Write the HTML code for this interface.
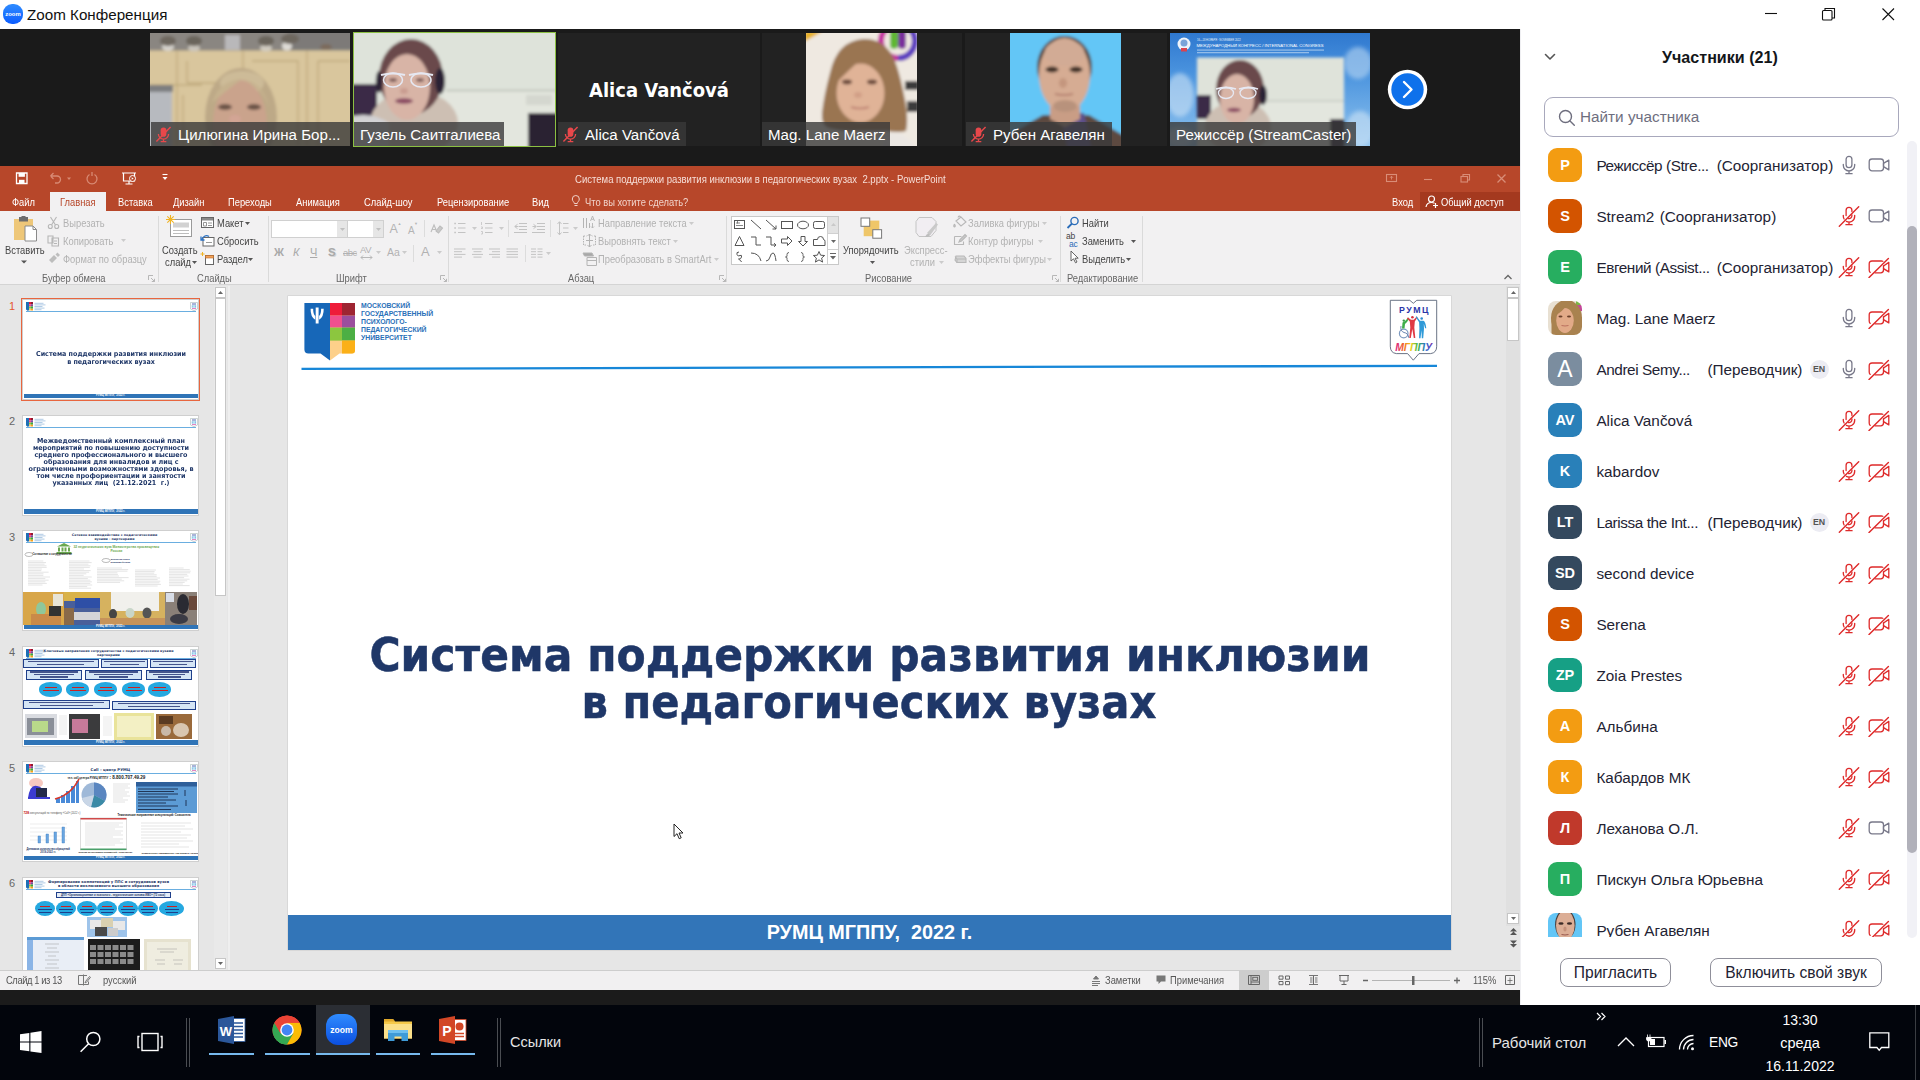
<!DOCTYPE html>
<html lang="ru"><head><meta charset="utf-8"><title>Zoom Конференция</title>
<style>
*{box-sizing:border-box;margin:0;padding:0}
html,body{width:1920px;height:1080px;overflow:hidden;background:#fff;font-family:"Liberation Sans","DejaVu Sans",sans-serif}
.a{position:absolute}
.t{position:absolute;white-space:nowrap;line-height:1}
svg{position:absolute;overflow:visible}
/* zoom */
#ztitle{left:0;top:0;width:1920px;height:29px;background:#fff}
#strip{left:0;top:29px;width:1520px;height:137px;background:#1a1a1a}
.tile{position:absolute;top:33px;height:113px;width:200px;background:#222;overflow:hidden}
.lbl{position:absolute;left:0;bottom:0;height:24.5px;background:rgba(58,58,58,.8);color:#fff;font-size:15.100px;line-height:25px;white-space:nowrap;padding-left:6px}
/* ppt */
#ppt{left:0;top:166px;width:1520px;height:824px;background:#e6e6e6;overflow:hidden}
#ptitle{left:0;top:0;width:1520px;height:45px;background:#b7472a}
#ribbon{left:0;top:45px;width:1520px;height:74px;background:#f2f1f2;border-bottom:1px solid #d4d4d4}
.rt{position:absolute;white-space:nowrap;line-height:1;font-size:10.5px;color:#444;transform:scaleX(.89);transform-origin:0 0}
.rd{color:#b2b2b2}
#status{left:0;top:805px;width:1520px;height:20px;background:#f3f3f3;border-top:1px solid #cfcfcf}
#gap{left:0;top:989.500px;width:1520px;height:16px;background:#1b1b1b}
#task{left:0;top:1005px;width:1920px;height:75px;background:#02050c}
/* right panel */
#panel{left:1520px;top:29px;width:400px;height:976px;background:#fff;border-left:1px solid #efeff2}
.row{position:absolute;left:0;width:400px;height:51px}
.av{position:absolute;left:27px;top:0;width:34px;height:34px;border-radius:9px;color:#fff;font-weight:bold;font-size:14.500px;text-align:center;line-height:34.500px}
.nm{position:absolute;left:75.400px;top:10.200px;font-size:15.300px;color:#232333;white-space:nowrap;line-height:1}
</style></head><body>
<div class="a" id="ztitle"></div>
<div class="a" id="strip"></div>
<!-- ===== Zoom title bar ===== -->
<svg style="left:2.500px;top:4px" width="20" height="20" viewBox="0 0 21 21"><defs><linearGradient id="zg" x1="0" y1="0" x2="0" y2="1"><stop offset="0" stop-color="#2f8cff"/><stop offset="1" stop-color="#0b5cff"/></linearGradient></defs><rect x="0" y="0" width="21" height="21" rx="9.5" fill="url(#zg)"/><text x="10.5" y="12.6" font-size="6.2" font-weight="bold" fill="#fff" text-anchor="middle" font-family="Liberation Sans,sans-serif">zoom</text></svg>
<div class="t" style="left:27px;top:6.500px;font-size:15.2px;color:#111">Zoom Конференция</div>
<svg style="left:1764px;top:7px" width="132" height="15" viewBox="0 0 132 15" fill="none" stroke="#111" stroke-width="1.1"><path d="M1 6.5h12"/><rect x="58.5" y="3.5" width="9.5" height="9.5" rx="1"/><path d="M61 3.5v-2h9.5v9.5h-2.5"/><path d="M118.5 1.5l11.5 11.5M130 1.5l-11.5 11.5"/></svg>

<!-- ===== Video strip ===== -->
<svg width="0" height="0"><defs>
<filter id="b1" x="-10%" y="-10%" width="120%" height="120%"><feGaussianBlur stdDeviation="1.5"/></filter>
<filter id="b0" x="-5%" y="-5%" width="110%" height="110%"><feGaussianBlur stdDeviation=".6"/></filter>
<filter id="b2" x="-10%" y="-10%" width="120%" height="120%"><feGaussianBlur stdDeviation="2.2"/></filter>
<symbol id="mut" viewBox="0 0 18 18"><rect x="6" y="1.5" width="6" height="10" rx="3" fill="#e8484b"/><path d="M3.6 8.5a5.4 5.4 0 0 0 10.8 0M9 14v2.2M6 16.6h6" fill="none" stroke="#e8484b" stroke-width="1.4"/><path d="M1.5 16.5L16.5 1" stroke="#e8484b" stroke-width="1.5"/></symbol>
</defs></svg>

<!-- tile 1 -->
<div class="tile" style="left:150px">
<svg width="200" height="113" viewBox="0 0 200 113"><g filter="url(#b1)">
<rect x="-5" y="-5" width="210" height="123" fill="#d9c69d"/>
<rect x="-5" y="-5" width="210" height="22.5" fill="#8a8681"/>
<rect x="138" y="-5" width="70" height="22" fill="#7d7a78"/>
<rect x="75" y="2" width="15" height="15" fill="#b9b8ba"/>
<ellipse cx="18" cy="14" rx="6" ry="4" fill="#d5d2cc"/><ellipse cx="44" cy="15" rx="6" ry="3.5" fill="#c9c4bb"/><ellipse cx="116" cy="15" rx="6" ry="3.5" fill="#cfcabf"/><ellipse cx="137" cy="13" rx="5" ry="4.5" fill="#dedbd6"/>
<ellipse cx="18" cy="8" rx="8" ry="5" fill="#6e675e"/><ellipse cx="44" cy="8" rx="8" ry="5" fill="#6b655c"/><ellipse cx="116" cy="8" rx="8" ry="5" fill="#6b655c"/><ellipse cx="140" cy="6" rx="9" ry="5" fill="#6e675e"/><ellipse cx="176" cy="14" rx="6" ry="3" fill="#7b6a5c"/>
<path d="M27 18v95M93 18v95M157 18v95M0 52h52M37 28v22M37 50h52M102 28h46v85M168 28h32M168 28v85M33 62v51" stroke="#bfa97c" stroke-width="1.400" fill="none"/>
<rect x="-5" y="52" width="27" height="66" fill="#b7babf"/><rect x="-5" y="52" width="28" height="7" fill="#7d7e80"/>
<ellipse cx="91" cy="84" rx="36" ry="49" fill="#bda987"/>
<ellipse cx="92" cy="50" rx="22" ry="12" fill="#cdbb98"/>
<ellipse cx="90" cy="92" rx="27" ry="45" fill="#caa38c"/>
<ellipse cx="75" cy="74" rx="7" ry="3" fill="#6b5347"/><ellipse cx="104" cy="74" rx="7" ry="3" fill="#6b5347"/>
<ellipse cx="85" cy="86" rx="6" ry="4" fill="#d3a595"/>
<path d="M62 70q6 -22 30 -24q-14 10 -30 24z" fill="#c6b28e"/><path d="M92 46q22 4 27 28q-8 -20 -27 -28z" fill="#c6b28e"/>
</g></svg>
<div class="lbl" style="width:200px;left:1px"><svg style="left:4px;top:4px" width="17" height="17"><use href="#mut"/></svg><span style="margin-left:21px">Цилюгина Ирина Бор...</span></div>
</div>

<!-- tile 2 (active speaker) -->
<div class="tile" style="left:353px;top:32px;width:203px;height:115px;border:1.5px solid #8cc043;background:#dde2d9">
<svg width="200" height="112" viewBox="0 0 200 112"><g filter="url(#b1)">
<rect x="-5" y="-5" width="210" height="122" fill="#dee3da"/>
<rect x="90" y="57" width="115" height="60" fill="#e3e6de"/>
<path d="M92 57.5h113" stroke="#b9beb4" stroke-width="1.4"/>
<rect x="172" y="62" width="26" height="10" fill="#d4d7cf"/>
<rect x="-5" y="51" width="28" height="32" fill="#3a2c47"/>
<path d="M174 80h31v37h-31z" fill="#2a2033"/>
<ellipse cx="60" cy="90" rx="44" ry="32" fill="#cdbfb3"/>
<ellipse cx="57" cy="44" rx="32" ry="38" fill="#6b4a4c"/>
<ellipse cx="86" cy="48" rx="5" ry="13" fill="#2a2434"/><ellipse cx="25" cy="49" rx="3.2" ry="11" fill="#2a2434"/>
<ellipse cx="53" cy="54" rx="23" ry="33" fill="#d8b4a6"/>
<path d="M-5 84q22 -6 40 6v30h-40z" fill="#d2d2d4"/>
<ellipse cx="50" cy="68" rx="9" ry="2.8" fill="#8a4a62"/><ellipse cx="39" cy="47" rx="4" ry="2" fill="#7a5a58"/><ellipse cx="66" cy="47" rx="4" ry="2" fill="#7a5a58"/><ellipse cx="50" cy="58" rx="4" ry="3" fill="#c99c90"/>
</g>
<g fill="none" stroke="#e6e8f2" stroke-width="1.5"><ellipse cx="39" cy="47" rx="9.5" ry="7"/><ellipse cx="67" cy="47" rx="10" ry="7"/><path d="M27 42q12 -3 24 0M55 42q12 -3 24 0" stroke-width="2.2"/></g>
</svg>
<div class="lbl" style="width:150px">Гузель Саитгалиева</div>
</div>

<!-- tile 3 -->
<div class="tile" style="left:558px;width:202px">
<div class="t" style="left:0;width:202px;text-align:center;top:47px;font-size:20px;font-weight:bold;color:#fff;font-family:'DejaVu Sans Condensed','DejaVu Sans',sans-serif">Alica Vančová</div>
<div class="lbl" style="width:128px"><svg style="left:4px;top:4px" width="17" height="17"><use href="#mut"/></svg><span style="margin-left:21px">Alica Vančová</span></div>
</div>

<!-- tile 4 -->
<div class="tile" style="left:762px">
<svg style="left:44px;top:0;overflow:hidden" width="111" height="113" viewBox="0 0 111 113"><g filter="url(#b1)">
<rect x="-5" y="-5" width="121" height="123" fill="#efe9e1"/>
<path d="M-2 -2h19l-19 11z" fill="#e8b22a"/>
<circle cx="92" cy="8" r="17" fill="none" stroke="#c32fa0" stroke-width="6"/>
<path d="M92 -9a17 17 0 0 1 0 34" fill="none" stroke="#5b3fc0" stroke-width="6"/>
<rect x="84" y="-4" width="8" height="20" rx="4" fill="#5fb733"/><rect x="92" y="-4" width="8" height="20" rx="4" fill="#7a2f9c"/>
<rect x="99" y="48" width="14" height="9" fill="#3a3a3a"/><rect x="101" y="68" width="12" height="11" fill="#3a3a3a"/>
<path d="M57 6q-26 2 -33 34q-6 22 -8 40q-1 12 6 15q14 4 28 3l30 0q14 2 20 0q3 -12 -2 -36q-6 -30 -12 -40q-10 -17 -29 -16z" fill="#9a7551"/>
<ellipse cx="54.500" cy="60" rx="24" ry="29.500" fill="#e0b397"/>
<path d="M30 50q2 -24 28 -26q-10 8 -28 26z" fill="#9a7551"/><path d="M58 24q18 2 21 30q-6 -20 -21 -30z" fill="#9a7551"/>
<ellipse cx="41" cy="49" rx="5" ry="2.400" fill="#6a4a3a"/><ellipse cx="66" cy="49" rx="5" ry="2.400" fill="#6a4a3a"/>
<ellipse cx="52" cy="62" rx="4" ry="3" fill="#d19f86"/>
<path d="M45 74q9 3 18 0" stroke="#b5766a" stroke-width="1.600" fill="none"/>
<path d="M80 100q18 -4 34 18h-40z" fill="#ebe7e3"/>
</g></svg>
<div class="lbl" style="width:128px">Mag. Lane Maerz</div>
</div>

<!-- tile 5 -->
<div class="tile" style="left:965px;width:202px">
<svg style="left:45px;top:0;overflow:hidden" width="111" height="113" viewBox="0 0 111 113"><g filter="url(#b1)">
<rect x="-5" y="-5" width="121" height="123" fill="#64c6f6"/>
<path d="M-5 118v-14l38 -22h46l37 22v14z" fill="#5b4a40"/>
<path d="M50 80l24 0l8 38h-24z" fill="#5d4f8b"/>
<path d="M40 70h30v16l-15 8l-15 -8z" fill="#c99d85"/>
<ellipse cx="54.500" cy="34" rx="27.500" ry="31" fill="#574a42"/>
<ellipse cx="54.500" cy="42" rx="25.500" ry="37" fill="#d6ac93"/>
<ellipse cx="54.500" cy="20" rx="20" ry="13" fill="#d2ab95"/>
<ellipse cx="42" cy="36.500" rx="6.500" ry="3" fill="#3d2e28"/><ellipse cx="66" cy="36.500" rx="6.500" ry="3" fill="#3d2e28"/>
<ellipse cx="53" cy="50" rx="4" ry="5" fill="#c4967e"/>
<path d="M45 61q9 2 18 0" stroke="#a86e62" stroke-width="1.600" fill="none"/>
<ellipse cx="55" cy="73" rx="12" ry="6" fill="#b8927c"/>
</g></svg>
<div class="lbl" style="width:146px;left:1px"><svg style="left:4px;top:4px" width="17" height="17"><use href="#mut"/></svg><span style="margin-left:21px">Рубен Агавелян</span></div>
</div>

<!-- tile 6 -->
<div class="tile" style="left:1170px;background:#3b86d6">
<svg width="200" height="113" viewBox="0 0 200 113">
<defs><linearGradient id="sky" x1="0" y1="0" x2="0" y2="1"><stop offset="0" stop-color="#2f78cf"/><stop offset=".35" stop-color="#4a93de"/><stop offset="1" stop-color="#8fc3ee"/></linearGradient></defs>
<rect width="200" height="113" fill="url(#sky)"/>
<g filter="url(#b2)" opacity=".6"><ellipse cx="10" cy="62" rx="14" ry="22" fill="#cfe4f6"/><ellipse cx="188" cy="30" rx="14" ry="16" fill="#b8d6f2"/><ellipse cx="190" cy="96" rx="14" ry="18" fill="#cfe4f6"/><ellipse cx="10" cy="104" rx="14" ry="10" fill="#d9eaf8"/></g>
<circle cx="14" cy="11" r="6.5" fill="#eef3fa"/><circle cx="14" cy="10" r="3.5" fill="#7aa3d8"/><rect x="11" y="15" width="6" height="3.5" fill="#d9434f"/>
<text x="27" y="7.6" font-size="2.6" fill="#e8f1fb" font-family="Liberation Sans,sans-serif">16—18 НОЯБРЯ · NOVEMBER 2022</text>
<text x="26.5" y="13.8" font-size="4.1" fill="#fff" font-family="Liberation Sans,sans-serif" textLength="127" lengthAdjust="spacingAndGlyphs">МЕЖДУНАРОДНЫЙ КОНГРЕСС / INTERNATIONAL CONGRESS</text>
<rect x="27" y="16.6" width="127" height=".9" fill="#b8d3ef"/><rect x="27" y="19.3" width="112" height=".9" fill="#b8d3ef"/>
<g filter="url(#b1)">
<rect x="27" y="24.5" width="147" height="92" fill="#dfe3da"/>
<rect x="95" y="68" width="79" height="50" fill="#e3e6de"/><path d="M96 68h78" stroke="#b9beb4" stroke-width="1.2"/>
<rect x="27" y="62" width="14" height="24" fill="#3a2c47"/><rect x="160" y="86" width="14" height="30" fill="#2a2033"/>
<ellipse cx="68" cy="94" rx="33" ry="26" fill="#cdbfb3"/>
<ellipse cx="70" cy="56" rx="24" ry="29" fill="#6b4a4c"/>
<ellipse cx="93" cy="62" rx="4" ry="10" fill="#2a2434"/>
<ellipse cx="67" cy="66" rx="17" ry="25" fill="#d8b4a6"/>
<ellipse cx="64" cy="77" rx="7" ry="2.2" fill="#8a4a62"/>
</g>
<g fill="none" stroke="#e6e8f2" stroke-width="1.3"><ellipse cx="56" cy="60" rx="7.5" ry="5.5"/><ellipse cx="78" cy="60" rx="8" ry="5.5"/><path d="M46 56q10 -3 20 0M69 56q10 -3 19 0" stroke-width="1.8"/></g>
</svg>
<div class="lbl" style="width:186px;padding-left:6px">Режиссёр (StreamCaster)</div>
</div>

<!-- next arrow -->
<svg style="left:1387px;top:69px" width="41" height="41" viewBox="0 0 41 41"><circle cx="20.5" cy="20.5" r="19.7" fill="#fff"/><circle cx="20.5" cy="20.5" r="16.2" fill="#0e71eb"/><path d="M17 13l7.5 7.5l-7.5 7.5" fill="none" stroke="#fff" stroke-width="2.4" stroke-linecap="round" stroke-linejoin="round"/></svg>

<div class="a" id="ppt">
<div class="a" id="ptitle"></div>
<div class="a" id="ribbon"></div>

</div>
<!-- ===== PowerPoint title bar + tabs ===== -->
<svg style="left:14px;top:171px" width="160" height="15" viewBox="0 0 160 15" fill="none">
<path d="M2.5 2h10.500v10.500h-10.500z" stroke="#fff" stroke-width="1.3"/><rect x="4.6" y="2" width="6.3" height="3.8" fill="#fff"/><rect x="5" y="8.8" width="5.5" height="3.7" fill="#fff"/>
<path d="M36.5 5l3 -3M36.5 5l3 3M36.5 5h6.5a3.5 3.5 0 0 1 0 7h-2" stroke="#d88a74" stroke-width="1.3"/><path d="M53 6.5l2 2.5l2 -2.5z" fill="#d88a74"/>
<path d="M80.5 3.5a5 5 0 1 1 -5 0M78 1v4" stroke="#d88a74" stroke-width="1.3"/>
<path d="M108 2h14M109.5 2v8h11v-8M115 10v2.5M111.5 13h7" stroke="#fff" stroke-width="1.2"/><circle cx="118.500" cy="7.500" r="3" stroke="#fff" fill="#b7472a" stroke-width="1"/><path d="M117.700 6.200l2 1.300l-2 1.300z" fill="#fff"/>
<path d="M148.500 3.500h5" stroke="#fff" stroke-width="1.100"/><path d="M148.500 6l2.500 3l2.500 -3z" fill="#fff"/>
</svg>
<div class="t" style="left:575px;top:174px;font-size:10.5px;color:#f6ddd6;transform:scaleX(.909);transform-origin:0 0">Система поддержки развития инклюзии в педагогических вузах&nbsp; 2.pptx - PowerPoint</div>
<svg style="left:1385px;top:172px" width="125" height="13" viewBox="0 0 125 13" fill="none" stroke="#d98d77" stroke-width="1.1"><rect x="1.5" y="2.5" width="10" height="7"/><path d="M6.5 7.500v-3.200M5 5.800l1.500 -1.600l1.500 1.600" stroke-width=".9"/><path d="M39 7.500h8"/><rect x="76" y="4.500" width="6.500" height="5.500"/><path d="M78 4.500v-2h6.500v5.500h-2"/><path d="M112.500 2.500l8 8M120.500 2.500l-8 8" stroke-width="1.300"/></svg>
<div class="a" style="left:50px;top:192px;width:56px;height:20px;background:#f2f1f2"></div>
<div class="rt " style="left:12px;top:196.5px;color:#fff">Файл</div>
<div class="rt " style="left:60px;top:196.5px;color:#b7472a">Главная</div>
<div class="rt " style="left:118px;top:196.5px;color:#fff">Вставка</div>
<div class="rt " style="left:173.4px;top:196.5px;color:#fff">Дизайн</div>
<div class="rt " style="left:228.4px;top:196.5px;color:#fff">Переходы</div>
<div class="rt " style="left:295.7px;top:196.5px;color:#fff">Анимация</div>
<div class="rt " style="left:364px;top:196.5px;color:#fff">Слайд-шоу</div>
<div class="rt " style="left:437px;top:196.5px;color:#fff">Рецензирование</div>
<div class="rt " style="left:532px;top:196.5px;color:#fff">Вид</div>
<svg style="left:571px;top:195px" width="10" height="13" viewBox="0 0 10 13" fill="none" stroke="#f1d3ca" stroke-width="1"><path d="M3.300 8.500c0 -1.500 -2 -2.200 -2 -4.500a3.500 3.500 0 0 1 7 0c0 2.300 -2 3 -2 4.500zM3.500 10.500h3"/></svg>
<div class="rt " style="left:584.7px;top:196.5px;color:#f1d3ca">Что вы хотите сделать?</div>
<div class="rt " style="left:1391.8px;top:196.5px;color:#fff">Вход</div>
<div class="a" style="left:1420px;top:192px;width:100px;height:19px;background:#a4391f"></div>
<svg style="left:1425px;top:195px" width="14" height="13" viewBox="0 0 14 13" fill="none" stroke="#fff" stroke-width="1.200"><circle cx="6.500" cy="4" r="3"/><path d="M1 12c.5 -3 2.500 -4.500 5.500 -4.500c1.200 0 2.200 .3 3 .8M10.500 8v5M8 10.500h5"/></svg>
<div class="rt " style="left:1441px;top:196.5px;color:#fff">Общий доступ</div>
<!-- ===== Ribbon ===== -->
<div class="a" style="left:157.5px;top:216px;width:1px;height:66px;background:#dadada"></div>
<div class="a" style="left:267.5px;top:216px;width:1px;height:66px;background:#dadada"></div>
<div class="a" style="left:447.5px;top:216px;width:1px;height:66px;background:#dadada"></div>
<div class="a" style="left:726px;top:216px;width:1px;height:66px;background:#dadada"></div>
<div class="a" style="left:1060.4px;top:216px;width:1px;height:66px;background:#dadada"></div>
<div class="a" style="left:1142px;top:216px;width:1px;height:66px;background:#dadada"></div>
<svg style="left:13px;top:216px" width="26" height="26" viewBox="0 0 26 26"><rect x="1" y="3" width="19" height="21" fill="#eec779"/><rect x="6" y="1" width="9" height="4.500" fill="#6d6d6d"/><rect x="8.500" y="0" width="4" height="2" fill="#6d6d6d"/><path d="M12 10h8l3.500 3.500v11.500h-11.500z" fill="#fff" stroke="#8a8a8a" stroke-width="1"/><path d="M20 10v3.500h3.500" fill="none" stroke="#8a8a8a" stroke-width="1"/></svg>
<div class="rt " style="left:5px;top:244.9px;">Вставить</div>
<svg style="left:21px;top:260px" width="6" height="4"><path d="M0 .5h6l-3 3z" fill="#555"/></svg>
<svg style="left:47px;top:216px" width="14" height="50" viewBox="0 0 14 50" fill="none" stroke="#b6b6b6" stroke-width="1.100"><path d="M3.500 1l5 8M9.500 1l-5 8"/><circle cx="3.300" cy="10.500" r="2"/><circle cx="9.700" cy="10.500" r="2"/><path d="M1 20h5v7h-5zM5 22h6.500v8h-6.500zM7 25h3M7 27.500h3"/><path d="M2 44l5 -5l3 3l-5 5zM8.500 38.500l2 -2l2.500 2.500l-2 2z" fill="#bdbdbd" stroke="none"/></svg>
<div class="rt rd" style="left:62.6px;top:218.1px;">Вырезать</div>
<div class="rt rd" style="left:62.6px;top:236.1px;">Копировать</div>
<svg style="left:121px;top:239px" width="5" height="3"><path d="M0 0h5l-2.500 3z" fill="#cbcbcb"/></svg>
<div class="rt rd" style="left:62.6px;top:254.1px;">Формат по образцу</div>
<div class="rt " style="left:41.5px;top:273.1px;color:#666">Буфер обмена</div>
<svg style="left:148px;top:275px" width="7" height="7" viewBox="0 0 7 7" fill="none" stroke="#b0b0b0" stroke-width=".9"><path d="M.500 5v-4.500h4.500M3 3l3.500 3.500M6.500 3.800v2.700h-2.700"/></svg>
<svg style="left:440px;top:275px" width="7" height="7" viewBox="0 0 7 7" fill="none" stroke="#b0b0b0" stroke-width=".9"><path d="M.500 5v-4.500h4.500M3 3l3.500 3.500M6.500 3.800v2.700h-2.700"/></svg>
<svg style="left:719px;top:275px" width="7" height="7" viewBox="0 0 7 7" fill="none" stroke="#b0b0b0" stroke-width=".9"><path d="M.500 5v-4.500h4.500M3 3l3.500 3.500M6.500 3.800v2.700h-2.700"/></svg>
<svg style="left:1052px;top:275px" width="7" height="7" viewBox="0 0 7 7" fill="none" stroke="#b0b0b0" stroke-width=".9"><path d="M.500 5v-4.500h4.500M3 3l3.500 3.500M6.500 3.800v2.700h-2.700"/></svg>
<svg style="left:166px;top:215px" width="27" height="23" viewBox="0 0 27 23"><rect x="4.500" y="4.500" width="21" height="17" fill="#fff" stroke="#9a9a9a"/><rect x="7" y="7.500" width="16" height="5" fill="#d2d2d2"/><path d="M7 15.500h16M7 18.500h16" stroke="#bdbdbd"/><path d="M4.500 0v9M0 4.500h9M1.300 1.300l6.400 6.400M7.700 1.300l-6.400 6.400" stroke="#f0b323" stroke-width="1.100"/></svg>
<div class="rt " style="left:162.4px;top:244.9px;">Создать</div>
<div class="rt " style="left:164.5px;top:257.4px;">слайд</div>
<svg style="left:191.500px;top:261px" width="5" height="3"><path d="M0 0h5l-2.500 3z" fill="#555"/></svg>
<svg style="left:200px;top:216px" width="16" height="52" viewBox="0 0 16 52" fill="none"><rect x="1.500" y="1.500" width="12" height="10" fill="#fff" stroke="#666"/><rect x="2" y="2" width="11" height="2.500" fill="#8a8a8a"/><path d="M3.500 6.500h3v3.500h-3zM8 7h4M8 9.500h4" stroke="#8a8a8a" stroke-width=".9"/>
<rect x="3" y="21.500" width="11" height="8.500" fill="#fff" stroke="#666"/><path d="M2 24a4.500 4.500 0 0 1 7 -3.500M1 20.500v3.500h3.500" stroke="#2b72c4" stroke-width="1.300"/><path d="M6 26.500h6" stroke="#999"/>
<rect x="5.500" y="39.500" width="8" height="9" fill="#fff" stroke="#666"/><rect x="5.500" y="39.500" width="8" height="2.500" fill="#f0a25a" stroke="#c46a20" stroke-width=".6"/><path d="M2.500 36v4M.5 38h4" stroke="#f0b323"/></svg>
<div class="rt " style="left:216.6px;top:218.1px;">Макет</div>
<svg style="left:245px;top:221.500px" width="5" height="3"><path d="M0 0h5l-2.500 3z" fill="#555"/></svg>
<div class="rt " style="left:216.6px;top:236.1px;">Сбросить</div>
<div class="rt " style="left:216.6px;top:254.1px;">Раздел</div>
<svg style="left:247.500px;top:257.500px" width="5" height="3"><path d="M0 0h5l-2.500 3z" fill="#555"/></svg>
<div class="rt " style="left:196.6px;top:273.1px;color:#666">Слайды</div>
<div class="a" style="left:271px;top:220px;width:113px;height:18px;background:#fff;border:1px solid #d0d0d0"></div>
<div class="a" style="left:337px;top:221px;width:11px;height:16px;background:#e6e6e6;border-right:1px solid #d0d0d0"></div><div class="a" style="left:373px;top:221px;width:10px;height:16px;background:#e6e6e6"></div>
<svg style="left:340px;top:228px" width="5" height="3"><path d="M0 0h5l-2.500 3z" fill="#c0c0c0"/></svg><svg style="left:375.5px;top:228px" width="5" height="3"><path d="M0 0h5l-2.500 3z" fill="#c0c0c0"/></svg>
<div class="t" style="left:389.500px;top:223px;font-size:12.500px;color:#b4b4b4">A</div><div class="t" style="left:397.500px;top:221.500px;font-size:4px;color:#b4b4b4">▲</div>
<div class="t" style="left:408px;top:225.500px;font-size:10px;color:#b4b4b4">A</div><div class="t" style="left:414px;top:222px;font-size:4px;color:#b4b4b4">▼</div>
<div class="a" style="left:423.500px;top:220px;width:1px;height:17px;background:#dcdcdc"></div>
<svg style="left:429px;top:222.500px" width="14" height="14" viewBox="0 0 14 14" fill="none" stroke="#bdbdbd" stroke-width="1.100"><path d="M2 9l3 -7l3 7M3 6.500h4"/><path d="M7 8l4 -5l2.500 2l-4 5z" fill="#c9c9c9"/></svg>
<div class="t" style="left:274px;top:247px;font-size:11px;color:#a9a9a9;font-weight:bold">Ж</div>
<div class="t" style="left:293px;top:247px;font-size:11px;color:#a9a9a9;font-style:italic">К</div>
<div class="t" style="left:310px;top:247px;font-size:11px;color:#a9a9a9;text-decoration:underline">Ч</div>
<div class="t" style="left:328px;top:247px;font-size:11.5px;color:#a9a9a9;font-weight:bold;text-shadow:1px 1px 0 #d5d5d5">S</div>
<div class="t" style="left:343px;top:248px;font-size:9.500px;color:#b2b2b2;text-decoration:line-through;letter-spacing:-.5px">abc</div>
<div class="t" style="left:360px;top:245px;font-size:9.500px;color:#b2b2b2;letter-spacing:-.4px">AV</div><svg style="left:360px;top:255px" width="13" height="5" fill="none" stroke="#b8b8b8"><path d="M1 2.500h11M3 .5l-2 2l2 2M10 .5l2 2l-2 2"/></svg>
<svg style="left:376px;top:251px" width="5" height="3"><path d="M0 0h5l-2.500 3z" fill="#cbcbcb"/></svg>
<div class="t" style="left:387px;top:247px;font-size:10.500px;color:#b2b2b2">Aa</div><svg style="left:402px;top:251px" width="5" height="3"><path d="M0 0h5l-2.500 3z" fill="#cbcbcb"/></svg>
<div class="a" style="left:413px;top:245px;width:1px;height:17px;background:#dcdcdc"></div>
<div class="t" style="left:421px;top:245px;font-size:13px;color:#b2b2b2">A</div><svg style="left:437px;top:251px" width="5" height="3"><path d="M0 0h5l-2.500 3z" fill="#cbcbcb"/></svg>
<div class="rt " style="left:335.5px;top:273.1px;color:#666">Шрифт</div>
<svg style="left:452px;top:219px" width="120" height="50" viewBox="0 0 120 50" fill="none" stroke="#c3c3c3" stroke-width="1">
<path d="M6 4.500h7.500M6 9h7.500M6 13.500h7.500"/><path d="M2.300 4.500h1.600M2.300 9h1.600M2.300 13.500h1.600" stroke-width="1.600"/>
<path d="M33 4.500h7.500M33 9h7.500M33 13.500h7.500"/><path d="M29.500 3v3M29 8h1.500v1.500h-1.500M29 12.500h1.500v2.500h-1.500" stroke-width=".8"/>
<path d="M67 4.500h8M67 7.500h8M67 10.500h8M62 13.500h13M65.500 5.300l-2.800 2.200l2.800 2.200M63 7.500h3.500"/>
<path d="M85 4.500h8M85 7.500h8M85 10.500h8M80 13.500h13M81.500 5.300l2.800 2.200l-2.800 2.200M80.500 7.500h3.500"/>
<path d="M111 4.500h5.500M111 9h5.500M111 13.500h5.500M107.500 3v12.500M105.500 5l2 -2.300l2 2.300M105.500 13.500l2 2.300l2 -2.300"/>
<path d="M2 30h11.500M2 32.700h8M2 35.400h11.500M2 38.100h8"/>
<path d="M20 30h11M21.500 32.700h8M20 35.400h11M21.500 38.100h8"/>
<path d="M37 30h11M40 32.700h8M37 35.400h11M40 38.100h8"/>
<path d="M54.500 30h11.500M54.500 32.700h11.500M54.500 35.400h11.500M54.500 38.100h11.500"/>
<path d="M79 30h5M85.500 30h5M79 32.700h5M85.500 32.700h5M79 35.400h5M85.500 35.400h5M79 38.100h5M85.500 38.100h5"/>
</svg>
<svg style="left:471.5px;top:227px" width="5" height="3"><path d="M0 0h5l-2.500 3z" fill="#cbcbcb"/></svg><svg style="left:498.5px;top:227px" width="5" height="3"><path d="M0 0h5l-2.500 3z" fill="#cbcbcb"/></svg><svg style="left:573px;top:227px" width="5" height="3"><path d="M0 0h5l-2.500 3z" fill="#cbcbcb"/></svg><svg style="left:545.5px;top:251.500px" width="5" height="3"><path d="M0 0h5l-2.500 3z" fill="#cbcbcb"/></svg>
<div class="a" style="left:508px;top:220px;width:1px;height:17px;background:#dcdcdc"></div><div class="a" style="left:550px;top:220px;width:1px;height:17px;background:#dcdcdc"></div><div class="a" style="left:524.500px;top:245px;width:1px;height:17px;background:#dcdcdc"></div>
<svg style="left:582px;top:215px" width="16" height="52" viewBox="0 0 16 52" fill="none" stroke="#b4b4b4" stroke-width="1">
<path d="M1.500 3v10M4.500 3v10M7.500 8v5"/><path d="M8.500 6l2 -5l2 5M9.300 4.300h2.500" stroke-width=".9"/><path d="M10.500 8v5M9 11.500l1.500 1.500l1.500 -1.500" stroke-width=".9"/>
<path d="M1.500 21v9h3M13.500 21v9h-3M1.500 21h3M13.500 21h-3" stroke-dasharray="1.500 1"/><path d="M7.500 19v13M5.500 21l2 -2l2 2M5.500 30l2 2l2 -2M4 25.500h7"/>
<path d="M5 42.500h9.500v8h-9.500z"/><path d="M1 38h9l1.500 3h-9z" fill="#a8a8a8"/><path d="M5 45.500h9.500"/>
</svg>
<div class="rt rd" style="left:598px;top:218.1px;">Направление текста</div><svg style="left:689px;top:222px" width="5" height="3"><path d="M0 0h5l-2.500 3z" fill="#cbcbcb"/></svg>
<div class="rt rd" style="left:598px;top:236.1px;">Выровнять текст</div><svg style="left:673px;top:240px" width="5" height="3"><path d="M0 0h5l-2.500 3z" fill="#cbcbcb"/></svg>
<div class="rt rd" style="left:598px;top:254.1px;">Преобразовать в SmartArt</div><svg style="left:714px;top:258px" width="5" height="3"><path d="M0 0h5l-2.500 3z" fill="#cbcbcb"/></svg>
<div class="rt " style="left:567.5px;top:273.1px;color:#666">Абзац</div>
<div class="a" style="left:731px;top:216px;width:108px;height:49px;background:#fff;border:1px solid #c8c8c8"></div>
<div class="a" style="left:827px;top:217px;width:11px;height:16px;background:#e3e3e3"></div><div class="a" style="left:827px;top:217px;width:1px;height:47px;background:#d0d0d0"></div><div class="a" style="left:827px;top:233px;width:11px;height:1px;background:#d0d0d0"></div><div class="a" style="left:827px;top:249px;width:11px;height:1px;background:#d0d0d0"></div>
<svg style="left:830.500px;top:223px" width="5" height="3"><path d="M0 3h5l-2.500 -3z" fill="#c9c9c9"/></svg><svg style="left:830.5px;top:239.5px" width="5" height="3"><path d="M0 0h5l-2.500 3z" fill="#666"/></svg><svg style="left:830px;top:253px" width="6" height="7" fill="#666"><path d="M0 0h6v1h-6zM0 3h6l-3 3.500z"/></svg>
<svg style="left:733px;top:217px" width="94" height="47" viewBox="0 0 94 47" fill="none" stroke="#555" stroke-width="1">
<rect x="1.500" y="3.500" width="10" height="8"/><path d="M3 6h4M3 8.500h7" stroke-width=".7"/><path d="M4.500 4v2.500" stroke-width=".7"/>
<path d="M18 3l10 9"/><path d="M33 3l10 9M43 12v-3.500M43 12h-3.500"/>
<rect x="48.500" y="4.500" width="11" height="7"/><ellipse cx="70" cy="8" rx="5.500" ry="3.800"/><rect x="80.500" y="4.500" width="11" height="7" rx="1.800"/>
<path d="M6.500 19.500l-4.500 9h9z"/><path d="M18 20h5v8h5"/><path d="M33 20h5v8h5M43 28l-2 -1.800M43 28l-2 1.800"/>
<path d="M48.500 22h6v-2.500l4.500 4.500l-4.500 4.500v-2.500h-6z"/><path d="M68 19.500h4v5h2.500l-4.500 4.500l-4.500 -4.500h2.500z"/><path d="M80.500 28.500v-6h4q0 -3 3 -3t3 3q1.500 0 1.500 2v4z"/>
<path d="M6 35q-3 0 -2 2.500t3 1q2 -1 1.500 1.500t-3 2q3 2 3 3" /><path d="M18 36q8 0 10 8"/><path d="M33 44q3 0 4 -4t3 -4t3 8"/>
<path d="M56 35.500q-2 0 -2 2v1.500q0 1 -1.500 1q1.500 0 1.500 1v1.500q0 2 2 2" stroke-width=".9"/><path d="M68 35.500q2 0 2 2v1.500q0 1 1.500 1q-1.500 0 -1.500 1v1.500q0 2 -2 2" stroke-width=".9"/>
<path d="M86 34.500l1.600 3.700l4 .3l-3 2.600l1 4l-3.600 -2.200l-3.600 2.200l1 -4l-3 -2.600l4 -.3z"/>
</svg>
<svg style="left:859px;top:217px" width="24" height="23" viewBox="0 0 24 23"><rect x="4.700" y="3.600" width="15.600" height="15.600" fill="#efc669"/><rect x="2" y="1" width="8.700" height="8.300" fill="#fff" stroke="#777"/><rect x="13.800" y="12.700" width="8.800" height="8.500" fill="#fff" stroke="#777"/></svg>
<div class="rt " style="left:842.7px;top:244.9px;">Упорядочить</div><svg style="left:870px;top:261px" width="5" height="3"><path d="M0 0h5l-2.500 3z" fill="#555"/></svg>
<svg style="left:915px;top:216px" width="25" height="25" viewBox="0 0 25 25" fill="none"><path d="M4 1.500h13l4 4v9l-5 6h-12l-3 -4v-11z" stroke="#c4c4c4" fill="#f1eef2"/><path d="M12 17l9 -10l2 1.500l-8 11z" fill="#c9c9c9"/><path d="M10 21q2 -4 4 -3t-1 3z" fill="#bdbdbd"/></svg>
<div class="rt rd" style="left:904px;top:244.9px;">Экспресс-</div><div class="rt rd" style="left:910.4px;top:257.4px;">стили</div><svg style="left:938.5px;top:261px" width="5" height="3"><path d="M0 0h5l-2.500 3z" fill="#cbcbcb"/></svg>
<svg style="left:953px;top:215px" width="15" height="52" viewBox="0 0 15 52" fill="none" stroke="#b8b8b8" stroke-width="1.100"><path d="M3 6l5 -4l5 5l-5 4zM5 2.500q1 -2.500 2.500 -.5"/><path d="M1.500 9q-1.500 2.500 0 3q1.500 -.5 0 -3" fill="#cbcbcb"/>
<path d="M1.500 21.500h7M1.500 21.500v8h9v-3"/><path d="M6 27l1 -2.500l5 -5l1.500 1.500l-5 5z" fill="#c9c9c9"/>
<path d="M3 41h8l2 2.500v4h-9l-2 -2.500z" fill="#d5d5d5"/><path d="M2 41.500l2 2.500h9M4 44v4"/></svg>
<div class="rt rd" style="left:968px;top:218.1px;">Заливка фигуры</div><svg style="left:1042px;top:222px" width="5" height="3"><path d="M0 0h5l-2.500 3z" fill="#cbcbcb"/></svg>
<div class="rt rd" style="left:968px;top:236.1px;">Контур фигуры</div><svg style="left:1037.5px;top:240px" width="5" height="3"><path d="M0 0h5l-2.500 3z" fill="#cbcbcb"/></svg>
<div class="rt rd" style="left:968px;top:254.1px;">Эффекты фигуры</div><svg style="left:1046.5px;top:258px" width="5" height="3"><path d="M0 0h5l-2.500 3z" fill="#cbcbcb"/></svg>
<div class="rt " style="left:864.5px;top:273.1px;color:#666">Рисование</div>
<svg style="left:1066px;top:216px" width="16" height="50" viewBox="0 0 16 50" fill="none"><circle cx="8.500" cy="5" r="3.600" stroke="#2b6cb8" stroke-width="1.400"/><path d="M6 7.500l-4.500 4.500" stroke="#2b6cb8" stroke-width="1.800"/>
<path d="M5 35l0 10l2.500 -2.200l2 4l1.500 -.8l-2 -3.800h3.200z" stroke="#555" stroke-width=".9" fill="#fff"/></svg>
<div class="t" style="left:1066px;top:232px;font-size:8.500px;color:#444;letter-spacing:-.3px">ab</div><div class="t" style="left:1069px;top:240px;font-size:8.500px;color:#2b6cb8;letter-spacing:-.3px">ac</div>
<div class="rt " style="left:1081.7px;top:218.1px;">Найти</div>
<div class="rt " style="left:1081.7px;top:236.1px;">Заменить</div><svg style="left:1131px;top:240px" width="5" height="3"><path d="M0 0h5l-2.500 3z" fill="#555"/></svg>
<div class="rt " style="left:1081.7px;top:254.1px;">Выделить</div><svg style="left:1125.5px;top:258px" width="5" height="3"><path d="M0 0h5l-2.500 3z" fill="#555"/></svg>
<div class="rt " style="left:1066.7px;top:273.1px;color:#666">Редактирование</div>
<svg style="left:1504px;top:274px" width="8" height="6" fill="none" stroke="#666" stroke-width="1.300"><path d="M.5 5l3.500 -3.500l3.500 3.500"/></svg>
<!-- ===== PowerPoint work area ===== -->
<div class="a" style="left:214px;top:286px;width:13px;height:684px;background:#e9e9e9"></div>
<div class="a" style="left:228px;top:286px;width:2px;height:684px;background:#efefef"></div>
<div class="a" style="left:215px;top:287px;width:11px;height:11px;background:#fff;border:1px solid #c6c6c6"></div><svg style="left:218px;top:290.500px" width="5" height="3"><path d="M0 3h5l-2.500 -3z" fill="#666"/></svg>
<div class="a" style="left:215px;top:298px;width:11px;height:298px;background:#fff;border:1px solid #c6c6c6"></div>
<div class="a" style="left:215px;top:958px;width:11px;height:11px;background:#fff;border:1px solid #c6c6c6"></div><svg style="left:218px;top:962px" width="5" height="3"><path d="M0 0h5l-2.500 3z" fill="#666"/></svg>
<div class="t" style="left:9px;top:300.5px;font-size:11px;color:#e4572e">1</div><div class="a" style="left:20.500px;top:298.0px;width:179px;height:103px;border:2px solid #e8663f;background:#fff"></div><div class="a" style="left:21.500px;top:299.0px;width:177px;height:101px;border:1px solid #cfcfcf;background:#fff;overflow:hidden"><svg style="left:3px;top:2px" width="22" height="9" viewBox="0 0 22 9"><path d="M0 0h3v8l-1 1l-2 -1.500z" fill="#1f6fb5"/><rect x="3" y="0" width="2" height="2.300" fill="#e3173e"/><rect x="5" y="0" width="2" height="2.300" fill="#8e1b2f"/><rect x="3" y="2.300" width="2" height="2.200" fill="#e8468a"/><rect x="5" y="2.300" width="2" height="2.200" fill="#7c4a9b"/><rect x="3" y="4.500" width="2" height="2.200" fill="#8bc53f"/><rect x="5" y="4.500" width="2" height="2.200" fill="#3aa945"/><rect x="3" y="6.700" width="2" height="1.800" fill="#f9c46b"/><rect x="5" y="6.700" width="2" height="1.800" fill="#f5a11c"/><path d="M8.500 1.300h9M8.500 2.900h11M8.500 4.500h8M8.500 6.100h10M8.500 7.700h7" stroke="#8fb5da" stroke-width=".7"/></svg><svg style="left:167px;top:2px" width="8" height="9" viewBox="0 0 8 9"><path d="M.5 .5h7v6.500l-3.500 1.700l-3.500 -1.700z" fill="#fff" stroke="#9aa" stroke-width=".5"/><path d="M2 2h4" stroke="#2a3fa0" stroke-width=".8"/><path d="M2.300 3.200v2.500M4 3v2.800M5.600 3.200v2.500" stroke="#3aa0d8" stroke-width=".7"/><path d="M2 6.600h4" stroke="#d23fa0" stroke-width=".7"/></svg><div class="a" style="left:3px;top:11px;width:170px;height:1px;background:#6aaee0"></div><div style="font-weight:bold;color:#1f3768;text-align:center;position:absolute;white-space:nowrap;font-family:'DejaVu Sans',sans-serif;left:0;width:176px;top:51.400px;font-size:6.850px;line-height:7.700px;transform:scaleX(.93)">Система поддержки развития инклюзии<br>в педагогических вузах</div><div class="a" style="left:1px;top:93.500px;width:174px;height:4.500px;background:#2f74b7"></div><div class="t" style="left:0;width:176px;text-align:center;top:94.200px;font-size:2.800px;color:#fff;font-weight:bold">РУМЦ МГППУ,&nbsp; 2022 г.</div></div>
<div class="t" style="left:9px;top:416.0px;font-size:11px;color:#666">2</div><div class="a" style="left:21.500px;top:414.5px;width:177px;height:101px;border:1px solid #cfcfcf;background:#fff;overflow:hidden"><svg style="left:3px;top:2px" width="22" height="9" viewBox="0 0 22 9"><path d="M0 0h3v8l-1 1l-2 -1.500z" fill="#1f6fb5"/><rect x="3" y="0" width="2" height="2.300" fill="#e3173e"/><rect x="5" y="0" width="2" height="2.300" fill="#8e1b2f"/><rect x="3" y="2.300" width="2" height="2.200" fill="#e8468a"/><rect x="5" y="2.300" width="2" height="2.200" fill="#7c4a9b"/><rect x="3" y="4.500" width="2" height="2.200" fill="#8bc53f"/><rect x="5" y="4.500" width="2" height="2.200" fill="#3aa945"/><rect x="3" y="6.700" width="2" height="1.800" fill="#f9c46b"/><rect x="5" y="6.700" width="2" height="1.800" fill="#f5a11c"/><path d="M8.500 1.300h9M8.500 2.900h11M8.500 4.500h8M8.500 6.100h10M8.500 7.700h7" stroke="#8fb5da" stroke-width=".7"/></svg><svg style="left:167px;top:2px" width="8" height="9" viewBox="0 0 8 9"><path d="M.5 .5h7v6.500l-3.500 1.700l-3.500 -1.700z" fill="#fff" stroke="#9aa" stroke-width=".5"/><path d="M2 2h4" stroke="#2a3fa0" stroke-width=".8"/><path d="M2.300 3.200v2.500M4 3v2.800M5.600 3.200v2.500" stroke="#3aa0d8" stroke-width=".7"/><path d="M2 6.600h4" stroke="#d23fa0" stroke-width=".7"/></svg><div class="a" style="left:3px;top:11px;width:170px;height:1px;background:#6aaee0"></div><div style="font-weight:bold;color:#1f3768;text-align:center;position:absolute;white-space:nowrap;font-family:'DejaVu Sans',sans-serif;left:0;width:176px;top:22px;font-size:6.750px;line-height:7.050px;transform:scaleX(.95)">Межведомственный комплексный план<br>мероприятий по повышению доступности<br>среднего профессионального и высшего<br>образования для инвалидов и лиц с<br>ограниченными возможностями здоровья, в<br>том числе профориентации и занятости<br>указанных лиц&nbsp; (21.12.2021&nbsp; г.)</div><div class="a" style="left:1px;top:93.500px;width:174px;height:4.500px;background:#2f74b7"></div><div class="t" style="left:0;width:176px;text-align:center;top:94.200px;font-size:2.800px;color:#fff;font-weight:bold">РУМЦ МГППУ,&nbsp; 2022 г.</div></div>
<div class="t" style="left:9px;top:531.5px;font-size:11px;color:#666">3</div><div class="a" style="left:21.500px;top:530.0px;width:177px;height:101px;border:1px solid #cfcfcf;background:#fff;overflow:hidden"><svg style="left:3px;top:2px" width="22" height="9" viewBox="0 0 22 9"><path d="M0 0h3v8l-1 1l-2 -1.500z" fill="#1f6fb5"/><rect x="3" y="0" width="2" height="2.300" fill="#e3173e"/><rect x="5" y="0" width="2" height="2.300" fill="#8e1b2f"/><rect x="3" y="2.300" width="2" height="2.200" fill="#e8468a"/><rect x="5" y="2.300" width="2" height="2.200" fill="#7c4a9b"/><rect x="3" y="4.500" width="2" height="2.200" fill="#8bc53f"/><rect x="5" y="4.500" width="2" height="2.200" fill="#3aa945"/><rect x="3" y="6.700" width="2" height="1.800" fill="#f9c46b"/><rect x="5" y="6.700" width="2" height="1.800" fill="#f5a11c"/><path d="M8.500 1.300h9M8.500 2.900h11M8.500 4.500h8M8.500 6.100h10M8.500 7.700h7" stroke="#8fb5da" stroke-width=".7"/></svg><svg style="left:167px;top:2px" width="8" height="9" viewBox="0 0 8 9"><path d="M.5 .5h7v6.500l-3.500 1.700l-3.500 -1.700z" fill="#fff" stroke="#9aa" stroke-width=".5"/><path d="M2 2h4" stroke="#2a3fa0" stroke-width=".8"/><path d="M2.300 3.200v2.500M4 3v2.800M5.600 3.200v2.500" stroke="#3aa0d8" stroke-width=".7"/><path d="M2 6.600h4" stroke="#d23fa0" stroke-width=".7"/></svg><div class="a" style="left:3px;top:11px;width:170px;height:1px;background:#6aaee0"></div><div style="font-weight:bold;color:#1f3768;text-align:center;position:absolute;white-space:nowrap;font-family:'DejaVu Sans',sans-serif;left:0;width:184px;top:2px;font-size:3.300px;line-height:4px">Сетевое взаимодействие с педагогическими<br>вузами - партнерами</div><svg style="left:33px;top:11.500px" width="16" height="11" viewBox="0 0 16 11" fill="#6aa84f"><path d="M8 0l7 3.500h-14z"/><path d="M2 4.500h2v4h-2zM5.500 4.500h2v4h-2zM8.500 4.500h2v4h-2zM12 4.500h2v4h-2zM.5 9h15v2h-15z"/></svg><div style="position:absolute;left:51px;top:13.500px;font-size:3.300px;line-height:4.200px;color:#6aa84f;font-weight:bold;text-align:center;white-space:nowrap">32 педагогических вуза Министерства просвещения<br>России</div><div class="t" style="left:10px;top:22.500px;font-size:2.600px;font-weight:bold;color:#222">Соглашение о сотрудничестве</div><div class="t" style="left:88px;top:28px;font-size:2.400px;font-weight:bold;color:#1f3768;line-height:2.800px">Дорожная карта<br>взаимодействия</div><svg style="left:0;top:21px" width="176" height="40" viewBox="0 0 176 40" fill="none" stroke="#c9c9c9" stroke-width=".5"><ellipse cx="6" cy="2.500" rx="4" ry="2" stroke="#777"/><ellipse cx="83" cy="8.500" rx="4" ry="2" stroke="#777"/><path d="M5 9.0h15.3"/><path d="M5 10.6h18.0"/><path d="M5 12.2h16.5"/><path d="M5 13.8h18.5"/><path d="M5 15.4h18.7"/><path d="M5 17.0h13.8"/><path d="M5 18.6h13.3"/><path d="M5 20.2h20.6"/><path d="M5 21.8h15.5"/><path d="M5 23.4h15.3"/><path d="M5 25.0h22.0"/><path d="M5 26.6h17.3"/><path d="M5 28.2h20.6"/><path d="M5 29.8h17.4"/><path d="M5 31.4h18.8"/><path d="M5 33.0h14.5"/><path d="M46 9.0h20.5"/><path d="M46 10.6h22.7"/><path d="M46 12.2h19.4"/><path d="M46 13.8h21.5"/><path d="M46 15.4h20.8"/><path d="M46 17.0h15.0"/><path d="M46 18.6h21.7"/><path d="M46 20.2h20.1"/><path d="M46 21.8h17.3"/><path d="M46 23.4h14.7"/><path d="M46 25.0h22.7"/><path d="M46 26.6h18.9"/><path d="M46 28.2h21.3"/><path d="M46 29.8h22.8"/><path d="M46 31.4h21.3"/><path d="M46 33.0h23.2"/><path d="M46 34.6h18.2"/><path d="M46 36.2h22.1"/><path d="M74 16.0h24.9"/><path d="M74 17.6h31.2"/><path d="M74 19.2h30.4"/><path d="M74 20.8h20.4"/><path d="M74 22.4h20.9"/><path d="M74 24.0h22.0"/><path d="M74 25.6h31.6"/><path d="M74 27.2h24.8"/><path d="M74 28.8h27.2"/><path d="M74 30.4h23.1"/><path d="M112 18.0h20.9"/><path d="M112 19.6h19.6"/><path d="M112 21.2h19.2"/><path d="M112 22.8h21.7"/><path d="M112 24.4h21.7"/><path d="M112 26.0h25.0"/><path d="M112 27.6h22.7"/><path d="M112 29.2h25.3"/><path d="M112 30.8h24.5"/><path d="M112 32.4h25.9"/><path d="M112 34.0h22.6"/><path d="M146 16.0h14.6"/><path d="M146 17.6h20.8"/><path d="M146 19.2h21.7"/><path d="M146 20.8h21.2"/><path d="M146 22.4h18.2"/><path d="M146 24.0h19.5"/><path d="M146 25.6h15.1"/><path d="M146 27.2h20.5"/><path d="M146 28.8h18.2"/><path d="M146 30.4h15.7"/><path d="M146 32.0h13.8"/><path d="M146 33.6h20.7"/></svg><svg style="left:0;top:61px" width="176" height="33" viewBox="0 0 176 33"><g filter="url(#b0)"><rect x="0" y="0" width="41" height="33" fill="#d8a648"/><rect x="30" y="2" width="10" height="12" fill="#e8e4d6"/><ellipse cx="18" cy="17" rx="5" ry="7" fill="#8fc79a"/><rect x="8" y="22" width="30" height="11" fill="#c98a4a"/><rect x="26" y="14" width="12" height="10" fill="#333"/>
<rect x="41" y="0" width="36" height="33" fill="#4a5f9a"/><rect x="41" y="0" width="36" height="9" fill="#d9b24a"/><rect x="52" y="6" width="25" height="10" fill="#2f4fa6"/><rect x="50" y="20" width="27" height="8" fill="#d4d4d8"/><rect x="41" y="16" width="10" height="17" fill="#8a6a4a"/>
<rect x="77" y="0" width="65" height="33" fill="#d6b25e"/><rect x="88" y="0" width="48" height="19" fill="#f1f0ec"/><ellipse cx="90" cy="22" rx="4" ry="5" fill="#444"/><ellipse cx="107" cy="21" rx="4.500" ry="5" fill="#c9d6c9"/><ellipse cx="124" cy="21" rx="4.500" ry="5.500" fill="#555"/><rect x="77" y="26" width="65" height="7" fill="#c6935a"/>
<rect x="142" y="0" width="32" height="33" fill="#8a8078"/><rect x="143" y="1" width="8" height="9" fill="#d8dde6"/><ellipse cx="160" cy="12" rx="6" ry="10" fill="#2a2a30"/><ellipse cx="156" cy="27" rx="9" ry="5" fill="#3a3a44"/><rect x="166" y="4" width="8" height="14" fill="#6a4a3a"/></g></svg><div class="a" style="left:1px;top:93.500px;width:174px;height:4.500px;background:#2f74b7"></div><div class="t" style="left:0;width:176px;text-align:center;top:94.200px;font-size:2.800px;color:#fff;font-weight:bold">РУМЦ МГППУ,&nbsp; 2022 г.</div></div>
<div class="t" style="left:9px;top:647.0px;font-size:11px;color:#666">4</div><div class="a" style="left:21.500px;top:645.5px;width:177px;height:101px;border:1px solid #cfcfcf;background:#fff;overflow:hidden"><svg style="left:3px;top:2px" width="22" height="9" viewBox="0 0 22 9"><path d="M0 0h3v8l-1 1l-2 -1.500z" fill="#1f6fb5"/><rect x="3" y="0" width="2" height="2.300" fill="#e3173e"/><rect x="5" y="0" width="2" height="2.300" fill="#8e1b2f"/><rect x="3" y="2.300" width="2" height="2.200" fill="#e8468a"/><rect x="5" y="2.300" width="2" height="2.200" fill="#7c4a9b"/><rect x="3" y="4.500" width="2" height="2.200" fill="#8bc53f"/><rect x="5" y="4.500" width="2" height="2.200" fill="#3aa945"/><rect x="3" y="6.700" width="2" height="1.800" fill="#f9c46b"/><rect x="5" y="6.700" width="2" height="1.800" fill="#f5a11c"/><path d="M8.500 1.300h9M8.500 2.900h11M8.500 4.500h8M8.500 6.100h10M8.500 7.700h7" stroke="#8fb5da" stroke-width=".7"/></svg><svg style="left:167px;top:2px" width="8" height="9" viewBox="0 0 8 9"><path d="M.5 .5h7v6.500l-3.500 1.700l-3.500 -1.700z" fill="#fff" stroke="#9aa" stroke-width=".5"/><path d="M2 2h4" stroke="#2a3fa0" stroke-width=".8"/><path d="M2.300 3.200v2.500M4 3v2.800M5.600 3.200v2.500" stroke="#3aa0d8" stroke-width=".7"/><path d="M2 6.600h4" stroke="#d23fa0" stroke-width=".7"/></svg><div class="a" style="left:3px;top:11px;width:170px;height:1px;background:#6aaee0"></div><div style="font-weight:bold;color:#1f3768;text-align:center;position:absolute;white-space:nowrap;font-family:'DejaVu Sans',sans-serif;left:0;width:172px;top:2px;font-size:3.300px;line-height:4px">Ключевые направления сотрудничества с педагогическими вузами<br>партнерами</div><div style="position:absolute;background:#d5e5f5;border:.6px solid #1f3f8a;left:0.5px;top:12px;width:76px;height:9px"></div><div style="position:absolute;left:5.8px;top:14.4px;width:65.4px;height:1.300px;background:#2a3a78;opacity:.85"></div><div style="position:absolute;left:14.9px;top:17.4px;width:47.1px;height:1.300px;background:#2a3a78;opacity:.85"></div><div style="position:absolute;background:#d5e5f5;border:.6px solid #1f3f8a;left:78.5px;top:12px;width:47px;height:9px"></div><div style="position:absolute;left:81.8px;top:14.4px;width:40.4px;height:1.300px;background:#2a3a78;opacity:.85"></div><div style="position:absolute;left:87.4px;top:17.4px;width:29.1px;height:1.300px;background:#2a3a78;opacity:.85"></div><div style="position:absolute;background:#d5e5f5;border:.6px solid #1f3f8a;left:127.5px;top:12px;width:46px;height:9px"></div><div style="position:absolute;left:130.7px;top:14.4px;width:39.6px;height:1.300px;background:#2a3a78;opacity:.85"></div><div style="position:absolute;left:136.2px;top:17.4px;width:28.5px;height:1.300px;background:#2a3a78;opacity:.85"></div><div style="position:absolute;background:#d5e5f5;border:.6px solid #1f3f8a;left:3.5px;top:23px;width:56px;height:10px"></div><div style="position:absolute;left:7.4px;top:24.9px;width:48.2px;height:1.300px;background:#2a3a78;opacity:.85"></div><div style="position:absolute;left:11.9px;top:27.4px;width:39.2px;height:1.300px;background:#2a3a78;opacity:.85"></div><div style="position:absolute;left:17.5px;top:29.9px;width:28.0px;height:1.300px;background:#2a3a78;opacity:.85"></div><div style="position:absolute;background:#d5e5f5;border:.6px solid #1f3f8a;left:62.5px;top:23px;width:57px;height:10px"></div><div style="position:absolute;left:66.5px;top:24.9px;width:49.0px;height:1.300px;background:#2a3a78;opacity:.85"></div><div style="position:absolute;left:71.0px;top:27.4px;width:39.9px;height:1.300px;background:#2a3a78;opacity:.85"></div><div style="position:absolute;left:76.8px;top:29.9px;width:28.5px;height:1.300px;background:#2a3a78;opacity:.85"></div><div style="position:absolute;background:#d5e5f5;border:.6px solid #1f3f8a;left:123.5px;top:23px;width:46px;height:10px"></div><div style="position:absolute;left:126.7px;top:24.9px;width:39.6px;height:1.300px;background:#2a3a78;opacity:.85"></div><div style="position:absolute;left:130.4px;top:27.4px;width:32.2px;height:1.300px;background:#2a3a78;opacity:.85"></div><div style="position:absolute;left:135.0px;top:29.9px;width:23.0px;height:1.300px;background:#2a3a78;opacity:.85"></div><div style="position:absolute;background:#d5e5f5;border:.6px solid #1f3f8a;left:0.5px;top:53px;width:87px;height:9px"></div><div style="position:absolute;left:6.6px;top:55.4px;width:74.8px;height:1.300px;background:#2a3a78;opacity:.85"></div><div style="position:absolute;left:17.0px;top:58.4px;width:53.9px;height:1.300px;background:#2a3a78;opacity:.85"></div><div style="position:absolute;background:#d5e5f5;border:.6px solid #1f3f8a;left:89.5px;top:54px;width:84px;height:9px"></div><div style="position:absolute;left:95.4px;top:56.4px;width:72.2px;height:1.300px;background:#2a3a78;opacity:.85"></div><div style="position:absolute;left:105.5px;top:59.4px;width:52.1px;height:1.300px;background:#2a3a78;opacity:.85"></div><div style="position:absolute;left:16.5px;top:35.500px;width:23px;height:14.500px;border-radius:50%;background:#25a8e0"></div><div style="position:absolute;left:22px;top:40px;width:12px;height:1.400px;background:#c22"></div><div style="position:absolute;left:20px;top:43.500px;width:16px;height:1.400px;background:#c22"></div><div style="position:absolute;left:43.5px;top:35.500px;width:23px;height:14.500px;border-radius:50%;background:#25a8e0"></div><div style="position:absolute;left:49px;top:40px;width:12px;height:1.400px;background:#c22"></div><div style="position:absolute;left:47px;top:43.500px;width:16px;height:1.400px;background:#c22"></div><div style="position:absolute;left:71.5px;top:35.500px;width:23px;height:14.500px;border-radius:50%;background:#25a8e0"></div><div style="position:absolute;left:77px;top:40px;width:12px;height:1.400px;background:#c22"></div><div style="position:absolute;left:75px;top:43.500px;width:16px;height:1.400px;background:#c22"></div><div style="position:absolute;left:99.5px;top:35.500px;width:23px;height:14.500px;border-radius:50%;background:#25a8e0"></div><div style="position:absolute;left:105px;top:40px;width:12px;height:1.400px;background:#c22"></div><div style="position:absolute;left:103px;top:43.500px;width:16px;height:1.400px;background:#c22"></div><div style="position:absolute;left:125.5px;top:35.500px;width:23px;height:14.500px;border-radius:50%;background:#25a8e0"></div><div style="position:absolute;left:131px;top:40px;width:12px;height:1.400px;background:#c22"></div><div style="position:absolute;left:129px;top:43.500px;width:16px;height:1.400px;background:#c22"></div><svg style="left:0;top:66px" width="176" height="28" viewBox="0 0 176 28"><g filter="url(#b0)"><rect x="2" y="1" width="32" height="24" fill="#d9dbe0"/><rect x="4" y="5" width="27" height="17" fill="#8a8f98"/><rect x="9" y="8" width="16" height="11" fill="#b9d98a"/><rect x="36" y="2" width="8" height="20" fill="#f4f4f4"/>
<rect x="46" y="1" width="31" height="25" fill="#3a3a3e"/><rect x="49" y="6" width="16" height="14" fill="#c77a9a"/><rect x="80" y="3" width="9" height="20" fill="#f4f4f4"/>
<rect x="91" y="0" width="40" height="27" fill="#e9e39a"/><rect x="94" y="3" width="34" height="21" fill="#f3f0c4"/>
<rect x="133" y="1" width="36" height="25" fill="#9a6a3a"/><ellipse cx="158" cy="17" rx="8" ry="7" fill="#d9c6b0"/><rect x="136" y="3" width="14" height="8" fill="#5a3a22"/><ellipse cx="143" cy="18" rx="5" ry="5" fill="#c9b9a8"/></g></svg><div class="a" style="left:1px;top:93.500px;width:174px;height:4.500px;background:#2f74b7"></div><div class="t" style="left:0;width:176px;text-align:center;top:94.200px;font-size:2.800px;color:#fff;font-weight:bold">РУМЦ МГППУ,&nbsp; 2022 г.</div></div>
<div class="t" style="left:9px;top:762.5px;font-size:11px;color:#666">5</div><div class="a" style="left:21.500px;top:761.0px;width:177px;height:101px;border:1px solid #cfcfcf;background:#fff;overflow:hidden"><svg style="left:3px;top:2px" width="22" height="9" viewBox="0 0 22 9"><path d="M0 0h3v8l-1 1l-2 -1.500z" fill="#1f6fb5"/><rect x="3" y="0" width="2" height="2.300" fill="#e3173e"/><rect x="5" y="0" width="2" height="2.300" fill="#8e1b2f"/><rect x="3" y="2.300" width="2" height="2.200" fill="#e8468a"/><rect x="5" y="2.300" width="2" height="2.200" fill="#7c4a9b"/><rect x="3" y="4.500" width="2" height="2.200" fill="#8bc53f"/><rect x="5" y="4.500" width="2" height="2.200" fill="#3aa945"/><rect x="3" y="6.700" width="2" height="1.800" fill="#f9c46b"/><rect x="5" y="6.700" width="2" height="1.800" fill="#f5a11c"/><path d="M8.500 1.300h9M8.500 2.900h11M8.500 4.500h8M8.500 6.100h10M8.500 7.700h7" stroke="#8fb5da" stroke-width=".7"/></svg><svg style="left:167px;top:2px" width="8" height="9" viewBox="0 0 8 9"><path d="M.5 .5h7v6.500l-3.500 1.700l-3.500 -1.700z" fill="#fff" stroke="#9aa" stroke-width=".5"/><path d="M2 2h4" stroke="#2a3fa0" stroke-width=".8"/><path d="M2.300 3.200v2.500M4 3v2.800M5.600 3.200v2.500" stroke="#3aa0d8" stroke-width=".7"/><path d="M2 6.600h4" stroke="#d23fa0" stroke-width=".7"/></svg><div class="a" style="left:3px;top:11px;width:170px;height:1px;background:#6aaee0"></div><div style="font-weight:bold;color:#1f3768;text-align:center;position:absolute;white-space:nowrap;font-family:'DejaVu Sans',sans-serif;left:0;width:176px;top:5px;font-size:3.800px">Call – центр РУМЦ</div><div style="position:absolute;left:45px;top:12.500px;font-size:4.600px;font-weight:bold;color:#222;white-space:nowrap"><span style="font-size:2.800px">тел. call-центра РУМЦ МГППУ</span> : 8.800.707.49.29</div><svg style="left:0;top:18px" width="176" height="76" viewBox="0 0 176 76"><g filter="url(#b0)" transform="translate(0,-6)">
<ellipse cx="13" cy="9" rx="7" ry="5" fill="#f6c9c0"/><path d="M5 24q2 -14 9 -12q6 0 8 10z" fill="#3a3ad0"/><rect x="13" y="14" width="11" height="9" fill="#222a4a"/><rect x="5" y="23" width="22" height="2" fill="#3a3ad0"/>
<path d="M33 29h4v-5h-4zM38 29h4v-8h-4zM43 29h4v-12h-4zM48 29h4v-17h-4zM53 29h3v-22h-3z" fill="#4a8ad8"/><path d="M32 25q16 -4 24 -20" stroke="#d8382a" stroke-width="1.600" fill="none"/>
<circle cx="71" cy="21" r="12.500" fill="#9fb9d8"/><path d="M71 21v-12.500a12.500 12.500 0 0 1 11 18.500z" fill="#5a86c0"/><path d="M71 21l11 6a12.500 12.500 0 0 1 -14 6z" fill="#3a8aa6"/><path d="M71 21l-3 12a12.500 12.500 0 0 1 -9 -9z" fill="#c9d6e6"/>
<rect x="113" y="8" width="61" height="31" fill="#5b9bd5"/><rect x="113" y="8" width="61" height="4.500" fill="#2f5f9a"/>
</g>
<g stroke="#c4c4c4" stroke-width=".5" fill="none" transform="translate(0,-6)"><path d="M90 10h17M90 12h15M90 14h17M90 16h12M90 18h16M90 20h14M90 22h17M90 24h10M90 26h15M90 28h12"/></g>
<g stroke="#1a2a4a" stroke-width=".9" transform="translate(0,-6)"><path d="M115 15h40M115 17.500h36M115 20h40M115 23h30M115 26h38M115 29h28M115 32h40M115 35.500h33M162 16v6M163 26v6"/></g>
<g stroke="#d9d9d9" stroke-width=".5"><path d="M7 44h37M7 48h37M7 52h37M7 56h37M7 60h37"/></g>
<path d="M15 63h2.500v-7h-2.500zM23 63h2.500v-9h-2.500zM31 63h2.500v-11h-2.500zM39 63h2.500v-16h-2.500z" fill="#6aa6e0" stroke="#3a7ac0" stroke-width=".4"/>
<rect x="57.500" y="38" width="46" height="32" fill="#fff" stroke="#bbb" stroke-width=".5"/><rect x="57.500" y="38" width="46" height="1.500" fill="#d04a4a"/><rect x="57.500" y="68.500" width="46" height="1.500" fill="#4aa06a"/>
<g stroke="#c9c9c9" stroke-width=".5" fill="none"><path d="M62 43h38M62 45h34M62 47h38M62 49h30M62 51h38M62 53h36M62 55h38M62 57h28M62 59h38M62 61h35M62 63h38M62 65h30"/><path d="M118 43h50M118 46h44M118 49h52M118 52h40M118 55h50M118 58h46M118 61h52M118 64h38M118 67h48"/></g>
</svg><div class="t" style="left:1px;top:50.300px;font-size:2.600px;color:#555"><b style="color:#c00000;font-size:3.300px">728</b> консультаций по телефону «Call» (2022 г.)</div><div class="t" style="left:95px;top:53.300px;font-size:2.700px;font-weight:bold;color:#111">Тематическое направление консультаций: Соискатель</div><div class="t" style="left:4px;top:87.300px;font-size:2.600px;font-weight:bold;color:#1f3768;line-height:2.700px;text-align:center">Динамика количества обращений<br>2019-2022 гг.</div><div class="t" style="left:56px;top:90px;font-size:2.400px;font-weight:bold;color:#111">журнал регистрации обращений: Соискатель</div><div class="t" style="left:119px;top:90.500px;font-size:2.400px;font-weight:bold;color:#111">Тематическое направление: Как попасть на работу?</div><div class="a" style="left:1px;top:93.500px;width:174px;height:4.500px;background:#2f74b7"></div><div class="t" style="left:0;width:176px;text-align:center;top:94.200px;font-size:2.800px;color:#fff;font-weight:bold">РУМЦ МГППУ,&nbsp; 2022 г.</div></div>
<div class="t" style="left:9px;top:878.0px;font-size:11px;color:#666">6</div><div class="a" style="left:21.500px;top:876.5px;width:177px;height:94.5px;border:1px solid #cfcfcf;background:#fff;overflow:hidden"><svg style="left:3px;top:2px" width="22" height="9" viewBox="0 0 22 9"><path d="M0 0h3v8l-1 1l-2 -1.500z" fill="#1f6fb5"/><rect x="3" y="0" width="2" height="2.300" fill="#e3173e"/><rect x="5" y="0" width="2" height="2.300" fill="#8e1b2f"/><rect x="3" y="2.300" width="2" height="2.200" fill="#e8468a"/><rect x="5" y="2.300" width="2" height="2.200" fill="#7c4a9b"/><rect x="3" y="4.500" width="2" height="2.200" fill="#8bc53f"/><rect x="5" y="4.500" width="2" height="2.200" fill="#3aa945"/><rect x="3" y="6.700" width="2" height="1.800" fill="#f9c46b"/><rect x="5" y="6.700" width="2" height="1.800" fill="#f5a11c"/><path d="M8.500 1.300h9M8.500 2.900h11M8.500 4.500h8M8.500 6.100h10M8.500 7.700h7" stroke="#8fb5da" stroke-width=".7"/></svg><svg style="left:167px;top:2px" width="8" height="9" viewBox="0 0 8 9"><path d="M.5 .5h7v6.500l-3.500 1.700l-3.500 -1.700z" fill="#fff" stroke="#9aa" stroke-width=".5"/><path d="M2 2h4" stroke="#2a3fa0" stroke-width=".8"/><path d="M2.300 3.200v2.500M4 3v2.800M5.600 3.200v2.500" stroke="#3aa0d8" stroke-width=".7"/><path d="M2 6.600h4" stroke="#d23fa0" stroke-width=".7"/></svg><div class="a" style="left:3px;top:11px;width:170px;height:1px;background:#6aaee0"></div><div style="font-weight:bold;color:#1f3768;text-align:center;position:absolute;white-space:nowrap;font-family:'DejaVu Sans',sans-serif;left:0;width:172px;top:2.300px;font-size:3.700px;line-height:4.300px">Формирование компетенций у ППС и сотрудников вузов<br>в области инклюзивного высшего образования</div><div style="position:absolute;left:33px;top:14.500px;width:115px;height:6px;background:#e4ecf7;border:.6px solid #1f3f8a;font-size:2.700px;font-weight:bold;color:#1f3768;text-align:center;line-height:5px;white-space:nowrap">ДПП «Организационные и психолого - педагогические основы ИВО» (72 часа)</div><div style="position:absolute;left:12px;top:23.500px;width:20px;height:15px;border-radius:50%;background:#25a8e0"></div><div style="position:absolute;left:17px;top:28.500px;width:10px;height:1.300px;background:#c22"></div><div style="position:absolute;left:15px;top:31.500px;width:14px;height:1.300px;background:#1f3f8a"></div><div style="position:absolute;left:16px;top:34px;width:12px;height:1.300px;background:#1f3f8a"></div><div style="position:absolute;left:33.5px;top:23.500px;width:20px;height:15px;border-radius:50%;background:#25a8e0"></div><div style="position:absolute;left:38.5px;top:28.500px;width:10px;height:1.300px;background:#c22"></div><div style="position:absolute;left:36.5px;top:31.500px;width:14px;height:1.300px;background:#1f3f8a"></div><div style="position:absolute;left:37.5px;top:34px;width:12px;height:1.300px;background:#1f3f8a"></div><div style="position:absolute;left:54.5px;top:23.500px;width:20px;height:15px;border-radius:50%;background:#25a8e0"></div><div style="position:absolute;left:59.5px;top:28.500px;width:10px;height:1.300px;background:#c22"></div><div style="position:absolute;left:57.5px;top:31.500px;width:14px;height:1.300px;background:#1f3f8a"></div><div style="position:absolute;left:58.5px;top:34px;width:12px;height:1.300px;background:#1f3f8a"></div><div style="position:absolute;left:74.5px;top:23.500px;width:20px;height:15px;border-radius:50%;background:#25a8e0"></div><div style="position:absolute;left:79.5px;top:28.500px;width:10px;height:1.300px;background:#c22"></div><div style="position:absolute;left:77.5px;top:31.500px;width:14px;height:1.300px;background:#1f3f8a"></div><div style="position:absolute;left:78.5px;top:34px;width:12px;height:1.300px;background:#1f3f8a"></div><div style="position:absolute;left:95px;top:23.500px;width:20px;height:15px;border-radius:50%;background:#25a8e0"></div><div style="position:absolute;left:100px;top:28.500px;width:10px;height:1.300px;background:#c22"></div><div style="position:absolute;left:98px;top:31.500px;width:14px;height:1.300px;background:#1f3f8a"></div><div style="position:absolute;left:99px;top:34px;width:12px;height:1.300px;background:#1f3f8a"></div><div style="position:absolute;left:115.5px;top:23.500px;width:20px;height:15px;border-radius:50%;background:#25a8e0"></div><div style="position:absolute;left:120.5px;top:28.500px;width:10px;height:1.300px;background:#c22"></div><div style="position:absolute;left:118.5px;top:31.500px;width:14px;height:1.300px;background:#1f3f8a"></div><div style="position:absolute;left:119.5px;top:34px;width:12px;height:1.300px;background:#1f3f8a"></div><div style="position:absolute;left:136.5px;top:23.500px;width:25.0px;height:15px;border-radius:50%;background:#25a8e0"></div><div style="position:absolute;left:144px;top:28.500px;width:10px;height:1.300px;background:#c22"></div><div style="position:absolute;left:142px;top:31.500px;width:14px;height:1.300px;background:#1f3f8a"></div><div style="position:absolute;left:143px;top:34px;width:12px;height:1.300px;background:#1f3f8a"></div><svg style="left:0;top:38px" width="176" height="56" viewBox="0 0 176 56"><g filter="url(#b0)">
<rect x="64" y="1" width="40" height="20" fill="#9fc4ea"/><rect x="67" y="4" width="12" height="9" fill="#e8e8e8"/><rect x="78" y="2" width="12" height="9" fill="#d9d0b0"/><rect x="90" y="5" width="12" height="9" fill="#e8e8e8"/><rect x="72" y="11" width="12" height="9" fill="#4a4a4a"/><rect x="85" y="12" width="10" height="8" fill="#ccc"/>
<rect x="4" y="21" width="57" height="35" fill="#e9eef6"/><rect x="4" y="21" width="57" height="3" fill="#5b9bd5"/><rect x="4" y="24" width="6" height="32" fill="#8ab4e6"/>
<rect x="65" y="23" width="52" height="33" fill="#1e1e1e"/>
<rect x="121" y="23" width="47" height="33" fill="#e6e2cf"/><rect x="124" y="26" width="41" height="28" fill="#efede0"/>
</g>
<g fill="#8a8a8a"><rect x="67" y="29" width="6" height="5"/><rect x="74.500" y="29" width="6" height="5"/><rect x="82" y="29" width="6" height="5"/><rect x="89.500" y="29" width="6" height="5"/><rect x="97" y="29" width="6" height="5"/><rect x="104.500" y="29" width="6" height="5"/><rect x="67" y="36" width="6" height="5"/><rect x="74.500" y="36" width="6" height="5"/><rect x="82" y="36" width="6" height="5"/><rect x="89.500" y="36" width="6" height="5"/><rect x="97" y="36" width="6" height="5"/><rect x="104.500" y="36" width="6" height="5"/><rect x="67" y="43" width="6" height="5"/><rect x="74.500" y="43" width="6" height="5"/><rect x="82" y="43" width="6" height="5"/><rect x="89.500" y="43" width="6" height="5"/><rect x="97" y="43" width="6" height="5"/><rect x="104.500" y="43" width="6" height="5"/></g>
<g stroke="#9a9a9a" stroke-width=".5"><path d="M22 28h14M24 32h10M22 36h14M25 40h8M22 44h14M24 48h10M22 52h14"/><path d="M134 33h20M137 36h14M132 44h10M150 44h10M134 48h8M151 48h8"/></g>
</svg></div>
<!-- ===== Main slide ===== -->
<div class="a" style="left:288px;top:296.300px;width:1162.500px;height:654px;background:#fff;box-shadow:0 0 0 .6px #d0d0d0"></div>
<svg style="left:304px;top:302px" width="52" height="59" viewBox="0 0 52 59">
<path d="M.4 1h25.600v57.400l-9.500 -6.900h-12.100q-4 0 -4 -4z" fill="#1767b8"/>
<path d="M26 1h25v47.500q0 3 -3 3h-12.500l-9.500 6.900z" fill="#fdd08a"/>
<rect x="26" y="1" width="12" height="12.600" fill="#ee1c3a"/><rect x="38" y="1" width="13" height="12.600" fill="#9e2532"/>
<rect x="26" y="13.600" width="12" height="12" fill="#f04f8e"/><rect x="38" y="13.600" width="13" height="12" fill="#9b4f9e"/>
<rect x="26" y="25.600" width="12" height="13" fill="#8cc63f"/><rect x="38" y="25.600" width="13" height="13" fill="#4caf44"/>
<path d="M38 38.600h13v9.900q0 3 -3 3h-10z" fill="#fbb017"/>
<path d="M11.700 5.500h2.900v16h-2.900zM6.600 6.700h2.600q-.2 5 2 7.300v3.800q-4.800 -3 -4.600 -11.100zM19.700 6.700h-2.600q.2 5 -2 7.300v3.800q4.800 -3 4.600 -11.100z" fill="#fff"/>
</svg>
<div class="t" style="left:361px;top:302px;font-size:6.850px;line-height:8px;font-weight:bold;color:#2a70b8">МОСКОВСКИЙ<br>ГОСУДАРСТВЕННЫЙ<br>ПСИХОЛОГО-<br>ПЕДАГОГИЧЕСКИЙ<br>УНИВЕРСИТЕТ</div>
<svg style="left:301px;top:362px" width="1137" height="10" viewBox="0 0 1137 10"><path d="M.5 6.900L1136 3.800" stroke="#1787d8" stroke-width="2.300"/></svg>
<svg style="left:1389px;top:299px" width="50" height="63" viewBox="0 0 50 63">
<defs><linearGradient id="rb" x1="0" y1="0" x2="1" y2="0"><stop offset="0" stop-color="#d61f8c"/><stop offset=".22" stop-color="#f0642a"/><stop offset=".42" stop-color="#f4d01c"/><stop offset=".6" stop-color="#3fb54a"/><stop offset=".8" stop-color="#2a6fd0"/><stop offset="1" stop-color="#7a2fa8"/></linearGradient></defs>
<path d="M1.300 1.300h19.500l3.500 3l3.500 -3h19.900v46q0 6.500 -6 7.300h-11.700l-5.700 6.600l-5.700 -6.600h-11.300q-6 -.8 -6 -7.300z" fill="#fff" stroke="#5a6478" stroke-width=".9"/>
<text x="25.500" y="14.200" font-size="8.800" font-weight="bold" fill="#2a35a8" text-anchor="middle" font-family="Liberation Sans,sans-serif" letter-spacing="1.5">РУМЦ</text>
<circle cx="14.700" cy="34.500" r="4.300" fill="none" stroke="#7d9ac0" stroke-width="1.200"/><path d="M12 27q-1 5 3 6.500q4 .5 5 5.500" fill="none" stroke="#6a86b0" stroke-width="1"/>
<circle cx="14.800" cy="21.600" r="1.200" fill="#3a9a48"/><path d="M13.500 23.500q3 -1.500 6 -5l.8 .7q-2 4 -4.300 5.800l-.5 4.500h-2.500z" fill="#3fae4a"/>
<circle cx="23.400" cy="18.300" r="1.300" fill="#d8303a"/><path d="M18.800 18.500l3.200 2.300h2.800l3 -3.300l.8 .8l-2.800 4.200l-.5 6l1 10.500h-1.500l-1.500 -9l-1.500 9h-1.500l1 -10.500l-.5 -6l-3 -3.200z" fill="#e03a44"/>
<circle cx="32.700" cy="19.500" r="1.300" fill="#2a8ad0"/><path d="M27.500 17.200l3.500 4.500h3.500q2 .5 2.800 7.500h-1.200l-1.300 -4.500l.2 5l-.8 9.500h-1.400l-.3 -8l-1 8h-1.400l.3 -10l-.3 -6l-3.400 -5.300z" fill="#2f9ad8"/>
<text x="24.600" y="51.500" font-size="10.500" font-weight="bold" font-style="italic" fill="url(#rb)" text-anchor="middle" font-family="Liberation Sans,sans-serif" letter-spacing="-.1">МГППУ</text>
</svg>
<div class="a" style="left:289px;top:632.300px;width:1162px;text-align:center;white-space:nowrap;font-family:'DejaVu Sans',sans-serif;font-weight:bold;font-size:45.500px;line-height:47.600px;color:#1f3768;-webkit-text-stroke:.5px #1f3768;transform:scaleX(.9336)">Система поддержки развития инклюзии</div>
<div class="a" style="left:288px;top:678.900px;width:1162px;text-align:center;white-space:nowrap;font-family:'DejaVu Sans',sans-serif;font-weight:bold;font-size:45.500px;line-height:47.600px;color:#1f3768;-webkit-text-stroke:.5px #1f3768;transform:scaleX(.9167)">в педагогических вузах</div>
<div class="a" style="left:288px;top:914.800px;width:1162.500px;height:35.500px;background:#3275b8"></div>
<div class="t" style="left:288.500px;width:1162px;text-align:center;top:922.500px;font-size:19.800px;font-weight:bold;color:#fff">РУМЦ МГППУ,&nbsp; 2022 г.</div>
<svg style="left:673px;top:823px" width="12" height="18" viewBox="0 0 12 18"><path d="M1 1v12.500l3 -2.800l2.200 5l2 -.9l-2.200 -4.800h4z" fill="#fff" stroke="#222" stroke-width="1"/></svg>
<div class="a" style="left:1506px;top:286px;width:14px;height:684px;background:#e0e0e0"></div>
<div class="a" style="left:1507px;top:287px;width:12px;height:11px;background:#fff;border:1px solid #c6c6c6"></div><svg style="left:1510.500px;top:290.500px" width="5" height="3"><path d="M0 3h5l-2.500 -3z" fill="#666"/></svg>
<div class="a" style="left:1507px;top:298px;width:12px;height:43px;background:#fff;border:1px solid #c6c6c6"></div>
<div class="a" style="left:1507px;top:913px;width:12px;height:11px;background:#fff;border:1px solid #c6c6c6"></div><svg style="left:1510.500px;top:917px" width="5" height="3"><path d="M0 0h5l-2.500 3z" fill="#666"/></svg>
<div class="a" style="left:1506px;top:926px;width:14px;height:44px;background:#e6e6e6"></div>
<svg style="left:1509.500px;top:928px" width="7" height="20" viewBox="0 0 7 20" fill="#555"><path d="M0 3.500h7l-3.500 -3.500zM0 7h7l-3.500 -3.500z"/><path d="M0 12.500h7l-3.500 3.500zM0 16h7l-3.500 3.500z"/></svg>
<div class="a" style="left:0;top:970px;width:1520px;height:19.500px;background:#f1f0f1;border-top:1px solid #cdcdcd"></div>
<div class="rt" style="left:5.5px;top:975.300px;color:#555;letter-spacing:-.45px">Слайд 1 из 13</div>
<svg style="left:77px;top:974px" width="14" height="12" viewBox="0 0 14 12" fill="none" stroke="#777" stroke-width="1"><path d="M6 1.500h-4.500v9h4.500M6.500 .5v11M7 1.500h3M7 10.500h4.500v-3"/><path d="M8.500 7.500l4 -5l1 .8l-4 5l-1.500 .5z"/></svg>
<div class="rt" style="left:102.5px;top:975.300px;color:#555;">русский</div>
<svg style="left:1091px;top:974px" width="10" height="12" viewBox="0 0 10 12" fill="none" stroke="#777" stroke-width="1"><path d="M1 7.500h8M1 9.500h8M1 11.500h6"/><path d="M2.500 5l2.500 -3l2.500 3z" fill="#777"/></svg>
<div class="rt" style="left:1105px;top:975.300px;color:#555;">Заметки</div>
<svg style="left:1156px;top:975px" width="10" height="10" viewBox="0 0 10 10"><path d="M.5 .5h9v6h-4.500l-2.500 2.500v-2.500h-2z" fill="#777"/></svg>
<div class="rt" style="left:1169.5px;top:975.300px;color:#555;">Примечания</div>
<div class="a" style="left:1239px;top:971px;width:30px;height:19px;background:#cdcdcd"></div>
<svg style="left:1246px;top:973px" width="270" height="15" viewBox="0 0 270 15" fill="none" stroke="#666" stroke-width="1">
<path d="M2.500 2.500h11v9h-11zM5 2.500v9M5 9h8.500"/><rect x="6.800" y="4.300" width="4.800" height="3" />
<path d="M33 3h4v3.200h-4zM39.500 3h4v3.200h-4zM33 8.500h4v3.200h-4zM39.500 8.500h4v3.200h-4z"/>
<path d="M63 2.500h4.500v9h-4.500M72 2.500h-4.500v9h4.500M64 5h2.500M64 7h2.500M64 9h2.500M69 5h2.500M69 7h2.500M69 9h2.500" stroke-width=".9"/>
<path d="M93 2.500h10M94 2.500v5.500h8v-5.500M98 8v3M95.500 11.500h5" />
<path d="M117 7.500h5M208 7.500h6M211 4.500v6" stroke-width="1.300"/>
<path d="M126 7.500h78" stroke="#b4b4b4"/><rect x="166" y="3" width="2.500" height="9" fill="#666" stroke="none"/>
<path d="M259.500 2.500h9v9h-9z"/><path d="M264 4.500v6M261.500 7.500h5" stroke-width=".8"/>
</svg>
<div class="rt" style="left:1472.5px;top:975.300px;color:#555;">115%</div>
<!--SLIDE_END-->
<div class="a" id="gap"></div>
<div class="a" id="panel"></div>
<!-- ===== Participants panel ===== -->
<svg width="0" height="0"><defs>
<symbol id="mic" viewBox="0 0 22 22"><g fill="none" stroke="#787889" stroke-width="1.300" stroke-linecap="round"><rect x="8.100" y="2.300" width="5.800" height="11.400" rx="2.900"/><path d="M5.300 10.300v1a5.700 5.700 0 0 0 11.400 0v-1M11 17v2.600M7.900 19.700h6.200"/></g></symbol>
<symbol id="micx" viewBox="0 0 22 22"><g fill="none" stroke="#de2a2a" stroke-width="1.300" stroke-linecap="round"><path d="M8.100 10.500v-5.300a2.900 2.900 0 0 1 5.800 0v1.300M13.900 9.800v1a2.900 2.900 0 0 1 -3.500 2.800"/><path d="M5.300 10.300v1q0 1.500 .8 2.700M16.700 10.300v1a5.700 5.700 0 0 1 -8.300 5.100M11 17v2.600M7.900 19.700h6.200"/><path d="M1.300 21.200L20.700 1.800" stroke-width="1.400"/></g></symbol>
<symbol id="cam" viewBox="0 0 24 22"><g fill="none" stroke="#787889" stroke-width="1.300" stroke-linejoin="round"><rect x="2.200" y="5" width="14.300" height="11.800" rx="2.800"/><path d="M16.500 9.400l5.300 -3.300v9.800l-5.300 -3.300z"/></g></symbol>
<symbol id="camx" viewBox="0 0 24 22"><g fill="none" stroke="#de2a2a" stroke-width="1.300" stroke-linejoin="round" stroke-linecap="round"><path d="M15.800 5.300q-.5 -.3 -1.300 -.3h-9.500q-2.800 0 -2.800 2.800v6.200q0 1.800 1 2.400M8 16.800h5.700q2.800 0 2.800 -2.800v-4"/><path d="M16.500 10l5.300 -3.600v9.500l-5.300 -3.300"/><path d="M2 21.600L21.400 2.400" stroke-width="1.400"/></g></symbol>
</defs></svg>
<svg style="left:1544px;top:53px" width="12" height="8" viewBox="0 0 12 8" fill="none" stroke="#555" stroke-width="1.600" stroke-linecap="round" stroke-linejoin="round"><path d="M1.500 1.500l4.500 4.500l4.500 -4.500"/></svg>
<div class="t" style="left:1662px;top:49.200px;font-size:16.100px;font-weight:bold;color:#131619">Участники (21)</div>
<div class="a" style="left:1544px;top:97px;width:355px;height:40px;border:1px solid #a8a8bc;border-radius:9px;background:#fff"></div>
<svg style="left:1558px;top:109px" width="18" height="18" viewBox="0 0 18 18" fill="none" stroke="#6e6e7e" stroke-width="1.400" stroke-linecap="round"><circle cx="7.500" cy="7.500" r="6"/><path d="M12 12l4.300 4.300"/></svg>
<div class="t" style="left:1580px;top:108.500px;font-size:15.300px;color:#6e6e7e">Найти участника</div>
<div class="a" style="left:1907px;top:141px;width:10px;height:797px;background:#f1f1f6;border-radius:5px"></div>
<div class="a" style="left:1907px;top:226px;width:10px;height:627px;background:#b1b1ba;border-radius:5px"></div>
<div class="a" style="left:1521px;top:140px;width:385px;height:797px;overflow:hidden">
<div class="row" style="top:8px"><div class="av" style="background:#f39c12;">Р</div><div class="nm" style="letter-spacing:-.4px">Режиссёр (Stre...</div><div class="nm" style="left:195.70000000000005px">(Соорганизатор)</div><svg style="left:317px;top:6px" width="22" height="22"><use href="#mic"/></svg><svg style="left:346.300px;top:5.800px" width="24" height="22"><use href="#cam"/></svg></div>
<div class="row" style="top:59px"><div class="av" style="background:#d35400;">S</div><div class="nm">Stream2</div><div class="nm" style="left:138.70000000000005px">(Соорганизатор)</div><svg style="left:317px;top:6px" width="22" height="22"><use href="#micx"/></svg><svg style="left:346.300px;top:5.800px" width="24" height="22"><use href="#cam"/></svg></div>
<div class="row" style="top:110px"><div class="av" style="background:#27ae60;">Е</div><div class="nm" style="letter-spacing:-.4px">Евгений (Assist...</div><div class="nm" style="left:195.70000000000005px">(Соорганизатор)</div><svg style="left:317px;top:6px" width="22" height="22"><use href="#micx"/></svg><svg style="left:346.300px;top:5.800px" width="24" height="22"><use href="#camx"/></svg></div>
<div class="row" style="top:161px"><svg style="left:27px;top:0;border-radius:8px;overflow:hidden" width="34" height="34" viewBox="0 0 34 34"><g filter="url(#b0)"><rect x="-3" y="-3" width="40" height="40" fill="#e8e0d2"/><rect x="28" y="-2" width="8" height="6" fill="#7ab648"/><rect x="29" y="4" width="7" height="6" fill="#c4479a"/><ellipse cx="18.500" cy="17" rx="15.500" ry="18" fill="#a9824f"/><rect x="3.500" y="16" width="31" height="20" fill="#a9824f"/><ellipse cx="17" cy="19.500" rx="8.800" ry="12.500" fill="#e2aa88"/><path d="M8 14q2 -8 10 -9q-3 5 -10 9z" fill="#a9824f"/><ellipse cx="12.500" cy="15.500" rx="2" ry="1" fill="#6a3f2a"/><ellipse cx="21" cy="15.500" rx="2" ry="1" fill="#6a3f2a"/><path d="M13.500 24.500q3.500 1 7 0" stroke="#b56a5a" stroke-width=".9" fill="none"/></g></svg><div class="nm">Mag. Lane Maerz</div><svg style="left:317px;top:6px" width="22" height="22"><use href="#mic"/></svg><svg style="left:346.300px;top:5.800px" width="24" height="22"><use href="#camx"/></svg></div>
<div class="row" style="top:212px"><div class="av" style="background:#7b8d9f;font-weight:normal;font-size:23px;line-height:35px">A</div><div class="nm" style="letter-spacing:-.4px">Andrei Semy...</div><div class="nm" style="left:186.5px">(Переводчик)</div><div style="position:absolute;left:288.500px;top:7.500px;width:19px;height:19px;border-radius:50%;background:#ececf3;color:#555;font-size:8.800px;font-weight:bold;text-align:center;line-height:19.500px">EN</div><svg style="left:317px;top:6px" width="22" height="22"><use href="#mic"/></svg><svg style="left:346.300px;top:5.800px" width="24" height="22"><use href="#camx"/></svg></div>
<div class="row" style="top:263px"><div class="av" style="background:#2980b9;">AV</div><div class="nm">Alica Vančová</div><svg style="left:317px;top:6px" width="22" height="22"><use href="#micx"/></svg><svg style="left:346.300px;top:5.800px" width="24" height="22"><use href="#camx"/></svg></div>
<div class="row" style="top:314px"><div class="av" style="background:#2980b9;">K</div><div class="nm">kabardov</div><svg style="left:317px;top:6px" width="22" height="22"><use href="#micx"/></svg><svg style="left:346.300px;top:5.800px" width="24" height="22"><use href="#camx"/></svg></div>
<div class="row" style="top:365px"><div class="av" style="background:#34495e;">LT</div><div class="nm" style="letter-spacing:-.4px">Larissa the Int...</div><div class="nm" style="left:186.5px">(Переводчик)</div><div style="position:absolute;left:288.500px;top:7.500px;width:19px;height:19px;border-radius:50%;background:#ececf3;color:#555;font-size:8.800px;font-weight:bold;text-align:center;line-height:19.500px">EN</div><svg style="left:317px;top:6px" width="22" height="22"><use href="#micx"/></svg><svg style="left:346.300px;top:5.800px" width="24" height="22"><use href="#camx"/></svg></div>
<div class="row" style="top:416px"><div class="av" style="background:#34495e;">SD</div><div class="nm">second device</div><svg style="left:317px;top:6px" width="22" height="22"><use href="#micx"/></svg><svg style="left:346.300px;top:5.800px" width="24" height="22"><use href="#camx"/></svg></div>
<div class="row" style="top:467px"><div class="av" style="background:#d35400;">S</div><div class="nm">Serena</div><svg style="left:317px;top:6px" width="22" height="22"><use href="#micx"/></svg><svg style="left:346.300px;top:5.800px" width="24" height="22"><use href="#camx"/></svg></div>
<div class="row" style="top:518px"><div class="av" style="background:#16a085;">ZP</div><div class="nm">Zoia Prestes</div><svg style="left:317px;top:6px" width="22" height="22"><use href="#micx"/></svg><svg style="left:346.300px;top:5.800px" width="24" height="22"><use href="#camx"/></svg></div>
<div class="row" style="top:569px"><div class="av" style="background:#f39c12;">А</div><div class="nm">Альбина</div><svg style="left:317px;top:6px" width="22" height="22"><use href="#micx"/></svg><svg style="left:346.300px;top:5.800px" width="24" height="22"><use href="#camx"/></svg></div>
<div class="row" style="top:620px"><div class="av" style="background:#f39c12;">К</div><div class="nm">Кабардов МК</div><svg style="left:317px;top:6px" width="22" height="22"><use href="#micx"/></svg><svg style="left:346.300px;top:5.800px" width="24" height="22"><use href="#camx"/></svg></div>
<div class="row" style="top:671px"><div class="av" style="background:#c0392b;">Л</div><div class="nm">Леханова О.Л.</div><svg style="left:317px;top:6px" width="22" height="22"><use href="#micx"/></svg><svg style="left:346.300px;top:5.800px" width="24" height="22"><use href="#cam"/></svg></div>
<div class="row" style="top:722px"><div class="av" style="background:#27ae60;">П</div><div class="nm">Пискун Ольга Юрьевна</div><svg style="left:317px;top:6px" width="22" height="22"><use href="#micx"/></svg><svg style="left:346.300px;top:5.800px" width="24" height="22"><use href="#camx"/></svg></div>
<div class="row" style="top:773px"><svg style="left:27px;top:0;border-radius:8px;overflow:hidden" width="34" height="34" viewBox="0 0 34 34"><g filter="url(#b0)"><rect x="-3" y="-3" width="40" height="40" fill="#64c6f6"/><ellipse cx="17.300" cy="11.500" rx="10.200" ry="15" fill="#4a3e3a"/><ellipse cx="17.300" cy="12.500" rx="9.300" ry="15" fill="#dcae96"/><ellipse cx="13" cy="10.500" rx="2.600" ry="1.300" fill="#3a2a26"/><ellipse cx="21.500" cy="10.500" rx="2.600" ry="1.300" fill="#3a2a26"/><ellipse cx="17" cy="16" rx="1.600" ry="2.500" fill="#c4907a"/><path d="M13.500 21.500q3.500 1 7 0" stroke="#9a5a50" stroke-width="1" fill="none"/></g></svg><div class="nm">Рубен Агавелян</div><svg style="left:317px;top:6px" width="22" height="22"><use href="#micx"/></svg><svg style="left:346.300px;top:5.800px" width="24" height="22"><use href="#camx"/></svg></div>
</div>
<div class="a" style="left:1560px;top:958px;width:111px;height:29px;border:1px solid #8f8f9a;border-radius:8px;background:#fff"></div><div class="t" style="left:1560px;width:111px;text-align:center;top:964.500px;font-size:15.600px;color:#232333">Пригласить</div>
<div class="a" style="left:1710px;top:958px;width:172px;height:29px;border:1px solid #8f8f9a;border-radius:8px;background:#fff"></div><div class="t" style="left:1710px;width:172px;text-align:center;top:964.500px;font-size:15.600px;color:#232333">Включить свой звук</div>
<div class="a" id="task"></div>
<!-- ===== Taskbar ===== -->
<svg style="left:19.500px;top:1031px" width="22" height="22" viewBox="0 0 22 22" fill="#fff"><path d="M0 3.200l9.300 -1.300v8.600h-9.300zM10.400 1.700l11.100 -1.600v10.400h-11.100zM0 11.600h9.300v8.600l-9.300 -1.300zM10.400 11.600h11.100v10.300l-11.100 -1.500z"/></svg>
<svg style="left:78px;top:1030px" width="24" height="24" viewBox="0 0 24 24" fill="none" stroke="#fff" stroke-width="1.500"><circle cx="15.300" cy="9" r="6.600"/><path d="M10.600 13.800l-8 8"/></svg>
<svg style="left:137px;top:1032px" width="26" height="20" viewBox="0 0 26 20" fill="none" stroke="#fff" stroke-width="1.400"><rect x="5" y="1.500" width="16" height="17"/><path d="M2.500 4.500h-1.500v11h1.500M23.500 4.500h1.500v11h-1.500"/></svg>
<div class="a" style="left:186px;top:1018px;width:1px;height:49px;background:#4a4d52"></div>
<div class="a" style="left:189px;top:1018px;width:1px;height:49px;background:#4a4d52"></div>
<div class="a" style="left:497px;top:1018px;width:1px;height:49px;background:#4a4d52"></div>
<div class="a" style="left:500px;top:1018px;width:1px;height:49px;background:#4a4d52"></div>
<div class="a" style="left:1478.5px;top:1018px;width:1px;height:49px;background:#4a4d52"></div>
<div class="a" style="left:1481.5px;top:1018px;width:1px;height:49px;background:#4a4d52"></div>
<div class="a" style="left:316px;top:1005px;width:54px;height:50px;background:#2b2e34"></div>
<div class="a" style="left:209px;top:1052.500px;width:45px;height:2.500px;background:#76b9ed"></div>
<div class="a" style="left:265px;top:1052.500px;width:45px;height:2.500px;background:#76b9ed"></div>
<div class="a" style="left:316px;top:1052.500px;width:54px;height:2.500px;background:#76b9ed"></div>
<div class="a" style="left:376px;top:1052.500px;width:44px;height:2.500px;background:#76b9ed"></div>
<div class="a" style="left:431px;top:1052.500px;width:44px;height:2.500px;background:#76b9ed"></div>
<svg style="left:217px;top:1015px" width="30" height="30" viewBox="0 0 30 30"><rect x="13" y="3.500" width="15" height="23" fill="#fff" stroke="#2b579a" stroke-width=".8"/><path d="M17 8h9M17 11.500h9M17 15h9M17 18.500h9M17 22h9" stroke="#2b579a" stroke-width="1.500"/><path d="M1 4l16 -3v28l-16 -3z" fill="#2b579a"/><text x="9" y="20.500" font-size="13" font-weight="bold" fill="#fff" text-anchor="middle" font-family="Liberation Sans,sans-serif">W</text></svg>
<svg style="left:272px;top:1014.500px" width="30" height="30" viewBox="0 0 30 30"><circle cx="15" cy="15" r="14.500" fill="#ea4335"/><path d="M15 15L2.440 22.250A14.500 14.500 0 0 0 15 29.500L22.250 17z" fill="#34a853" transform="rotate(0 15 15)"/><path d="M15 15L2.440 22.250A14.500 14.500 0 0 0 15 29.500z" fill="#34a853"/><path d="M2.440 22.250A14.500 14.500 0 0 0 15 29.500L21.300 18.600L15 15L8.700 18.600L2.440 7.750A14.500 14.500 0 0 0 2.440 22.250z" fill="#34a853"/><path d="M15 29.500A14.500 14.500 0 0 0 27.560 7.750H15L21.300 18.600z" fill="#fbbc05"/><path d="M2.440 7.750L8.700 18.600L15 7.750h12.560A14.500 14.500 0 0 0 2.440 7.750z" fill="#ea4335"/><circle cx="15" cy="15" r="6.800" fill="#fff"/><circle cx="15" cy="15" r="5.400" fill="#4285f4"/></svg>
<svg style="left:326px;top:1014px" width="31" height="31" viewBox="0 0 31 31"><defs><linearGradient id="zg2" x1="0" y1="0" x2="0" y2="1"><stop offset="0" stop-color="#2f8cff"/><stop offset="1" stop-color="#0b4fe0"/></linearGradient></defs><rect width="31" height="31" rx="12" fill="url(#zg2)"/><text x="15.500" y="18.600" font-size="8.600" font-weight="bold" fill="#fff" text-anchor="middle" font-family="Liberation Sans,sans-serif">zoom</text></svg>
<svg style="left:383px;top:1016px" width="30" height="27" viewBox="0 0 30 27"><path d="M1 3h9l2 2.500h17v17h-28z" fill="#f5c94a"/><path d="M1 3h9l2 2.500h-11z" fill="#e0a82a"/><rect x="1" y="8" width="28" height="14.500" fill="#fbe08a"/><path d="M5 14h20v11h-6.500v-4.500h-7v4.500h-6.500z" fill="#3f9bd8"/><rect x="5" y="14" width="20" height="3" fill="#6fc0f0"/></svg>
<svg style="left:438px;top:1015px" width="30" height="30" viewBox="0 0 30 30"><rect x="13" y="4.500" width="15" height="21" fill="#fff" stroke="#d24726" stroke-width=".8"/><circle cx="21.500" cy="11.500" r="4" fill="#d24726"/><path d="M17 18.500h9M17 21.500h9" stroke="#d24726" stroke-width="1.500"/><path d="M1 4l16 -3v28l-16 -3z" fill="#d24726"/><text x="9" y="20.500" font-size="14" font-weight="bold" fill="#fff" text-anchor="middle" font-family="Liberation Sans,sans-serif">P</text></svg>
<div class="t" style="left:510px;top:1034.500px;font-size:14.500px;color:#e6e6e6">Ссылки</div>
<div class="t" style="left:1492px;top:1034.500px;font-size:15px;color:#e6e6e6">Рабочий стол</div>
<svg style="left:1596px;top:1012px" width="10" height="9" viewBox="0 0 10 9" fill="none" stroke="#fff" stroke-width="1.200"><path d="M1 1l3.500 3.500l-3.500 3.500M5.500 1l3.500 3.500l-3.500 3.500"/></svg>
<svg style="left:1617px;top:1037px" width="18" height="10" viewBox="0 0 18 10" fill="none" stroke="#fff" stroke-width="1.300"><path d="M1 9l8 -8l8 8"/></svg>
<svg style="left:1645px;top:1034px" width="22" height="14" viewBox="0 0 22 14" fill="none" stroke="#fff" stroke-width="1.200"><rect x="3.500" y="3.500" width="15.500" height="9"/><path d="M19.500 6v4h1.500v-4z" fill="#fff" stroke="none"/><rect x="5" y="5" width="5" height="6" fill="#fff" stroke="none"/><path d="M2.500 .5v3M5 .5v3M1.500 3.500h4.500v2q0 1.500 -2.200 1.500t-2.300 -1.500z" fill="#fff" stroke-width=".8"/></svg>
<svg style="left:1678px;top:1034px" width="18" height="17" viewBox="0 0 18 17" fill="none" stroke="#fff" stroke-width="1.300"><path d="M1.500 15.500a14 14 0 0 1 14 -14M5.500 15.500a10 10 0 0 1 10 -10M9.500 15.500a6 6 0 0 1 6 -6"/><circle cx="14.500" cy="14.800" r="1.500" fill="#fff" stroke="none"/></svg>
<div class="t" style="left:1709px;top:1036px;font-size:13.800px;color:#fff;letter-spacing:-.3px">ENG</div>
<div class="t" style="left:1750px;width:100px;text-align:center;top:1012.800px;font-size:14px;color:#fff">13:30</div>
<div class="t" style="left:1750px;width:100px;text-align:center;top:1036px;font-size:14.500px;color:#fff">среда</div>
<div class="t" style="left:1750px;width:100px;text-align:center;top:1059px;font-size:14px;color:#fff">16.11.2022</div>
<svg style="left:1869px;top:1032px" width="21" height="20" viewBox="0 0 21 20" fill="none" stroke="#fff" stroke-width="1.300"><path d="M.8 .8h19v14.700h-7.300l-2.300 2.700l-2.300 -2.700h-7.100z"/></svg>
<div class="a" style="left:1914.500px;top:1005px;width:1px;height:75px;background:#3a3d42"></div>
</body></html>
